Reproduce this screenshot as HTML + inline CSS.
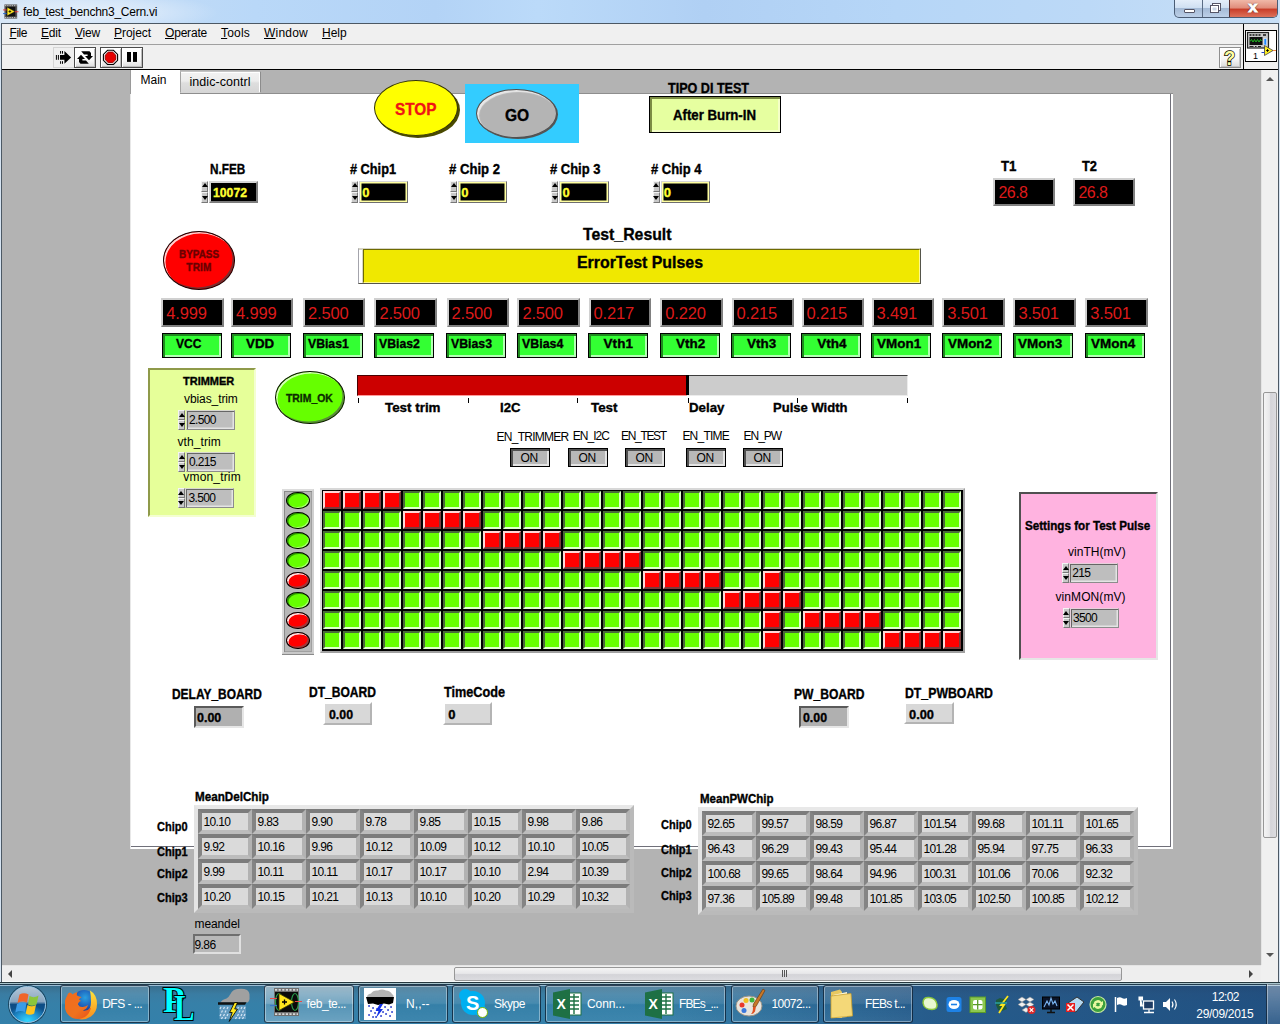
<!DOCTYPE html>
<html><head><meta charset="utf-8"><title>feb_test_benchn3_Cern.vi</title>
<style>
*{box-sizing:border-box;margin:0;padding:0}
html,body{width:1280px;height:1024px;overflow:hidden;background:#b3b3b3;font-family:"Liberation Sans",sans-serif;font-size:12px;color:#000}
.a{position:absolute}
#title{left:0;top:0;width:1280px;height:24px;background:linear-gradient(90deg,#d2e3f5 0,#c4dcf6 8%,#b9d8f8 20%,#b3d3f6 34%,#bbdaf9 42%,#b0d0f4 55%,#b6d6f7 70%,#bcd9f7 85%,#c8dff6 100%)}
#title .t{left:23px;top:4px;font-size:12.5px;color:#000;letter-spacing:-0.1px}
#menu{left:2px;top:24px;width:1276px;height:21px;background:#f0f0f0;border-bottom:1px solid #a0a0a0}
#menu span{position:absolute;top:3px;font-size:12.5px}
#menu u{text-decoration:underline}
#tool{left:2px;top:45px;width:1276px;height:24px;background:#f0f0f0}
#tline{left:2px;top:69px;width:1276px;height:1px;background:#000}
#work{left:2px;top:70px;width:1259px;height:895px;background:#b3b3b3}
.tb{background:linear-gradient(#fff 0,#fafafa 60%,#dcdcdc 100%);border:1px solid #4c4c4c;box-shadow:inset 1px 1px 0 #fff,inset -1px -1px 0 #bcbcbc}
.t{white-space:nowrap}
.sp{background:#c8c8c8}
.sp i{position:absolute;left:0;width:100%;height:50%;border:1px solid;border-color:#f4f4f4 #787878 #787878 #f4f4f4;background:#c8c8c8}
.sp i.u{top:0}.sp i.d{bottom:0}
.sp i.u:after{content:"";position:absolute;left:-.5px;top:1.5px;border:3px solid transparent;border-top:none;border-bottom:4px solid #000}
.sp i.d:after{content:"";position:absolute;left:-.5px;bottom:1.5px;border:3px solid transparent;border-bottom:none;border-top:4px solid #000}
i.g,i.r{position:absolute;width:18px;height:18px;border:2px solid}
i.g{background:#66ff00;border-color:#4a6a3a #e0ffd0 #e0ffd0 #4a6a3a}
i.r{background:#ff0000;border-color:#ffd6d6 #7a3c3c #7a3c3c #ffd6d6}

</style></head><body>
<div id="title" class="a"></div>
<div id="menu" class="a"></div>
<div id="tool" class="a"></div>
<div id="tline" class="a"></div>
<div id="work" class="a"></div>
<!-- toolbar buttons -->
<div class="a" style="left:53px;top:47px;width:21.500px;height:21px;border:1px solid #d4d4d4;background:#efefef"></div>
<div class="a tb" style="left:74px;top:47px;width:22px;height:21px"></div>
<div class="a tb" style="left:100px;top:47px;width:22px;height:21px"></div>
<div class="a tb" style="left:121px;top:47px;width:22px;height:21px"></div>
<svg class="a" style="left:53px;top:47px" width="91" height="21" viewBox="53 47 91 21">
<path d="M60 55h4.400v-4l6.700 6.400-6.700 6.400v-4h-4.400z" fill="#000"/>
<path d="M56.400 55v4.800M58.400 55v4.800" stroke="#000" stroke-width="1"/>
<path d="M60.600 51v2.700M62.500 51v2.700M60.600 61.200v2.600M62.500 61.200v2.600" stroke="#000" stroke-width="1"/>
<path d="M81.20 51.20 L89.50 51.20 L91.00 53.00 L91.00 56.00 L93.00 56.00 L89.00 60.30 L85.00 56.00 L87.60 56.00 L87.60 54.60 L84.00 54.60Z" fill="#000"/><path d="M88.80 63.80 L80.50 63.80 L79.00 62.00 L79.00 59.00 L77.00 59.00 L81.00 54.70 L85.00 59.00 L82.40 59.00 L82.40 60.40 L86.00 60.40Z" fill="#000"/>
<path d="M107.56 50.30 L113.44 50.30 L117.60 54.46 L117.60 60.34 L113.44 64.50 L107.56 64.50 L103.40 60.34 L103.40 54.46Z" fill="#fff" stroke="#000" stroke-width="1.100"/>
<path d="M108.30 52.10 L112.70 52.10 L115.80 55.20 L115.80 59.60 L112.70 62.70 L108.30 62.70 L105.20 59.60 L105.20 55.20Z" fill="#e60000" stroke="#8a0000" stroke-width=".9"/>
<rect x="127" y="52" width="4" height="9.900" fill="#000"/><rect x="133" y="52" width="4" height="9.900" fill="#000"/>
</svg>
<!-- right toolbar -->
<div class="a" style="left:1243px;top:24px;width:1px;height:46px;background:#000"></div>
<div class="a" style="left:1244px;top:24px;width:34px;height:45px;background:#f0f0f0"></div>
<div class="a" style="left:1245px;top:30px;width:32px;height:32px;background:#fff;border:1px solid #000"></div>
<svg class="a" style="left:1245px;top:30px" width="34" height="32" viewBox="0 0 34 32">
<rect x="2.500" y="2.500" width="21" height="15.500" fill="#c8c8c8" stroke="#222" stroke-width="1.200"/>
<rect x="4.500" y="7" width="13" height="8" fill="#111"/>
<path d="M5 11.500l1.500-2 1.500 2.500 1.500-2.500 1.500 2.500 1.500-2.500 1.500 2.500 1.500-2.500 1 1.500" fill="none" stroke="#2c2" stroke-width=".9"/>
<path d="M4.500 5h2M7.500 5h2M10.500 5h2M13.500 5h2M18 5h3" stroke="#111" stroke-width="1.600"/>
<rect x="19" y="8.500" width="2.600" height="6.500" fill="#28f" stroke="#fff" stroke-width=".5"/>
<path d="M4.500 16.500h4M10 16.500h1.500M13 16.500h3" stroke="#222" stroke-width="1"/>
<path d="M19.500 15.500v10l8.500-5z" fill="#ffee22" stroke="#444" stroke-width=".8"/>
<path d="M21 20.500h3M22.500 19v3" stroke="#000" stroke-width=".8"/>
<path d="M16.500 22.500h3" stroke="#24c" stroke-width="1"/><path d="M28 20.500h3" stroke="#e84" stroke-width="1"/>
<text x="8" y="29" font-family="Liberation Sans,sans-serif" font-size="9" fill="#000">1</text>
</svg>
<div class="a" style="left:1219px;top:47px;width:22px;height:21px;background:linear-gradient(#fff 0,#f8f8f8 55%,#dadada 100%);border:1px solid #8e8e8e;box-shadow:inset 1px 1px 0 #fff,inset -1px -1px 0 #c4c4c4"></div>
<span class="a" style="left:1224.200px;top:47.500px;font-size:20px;line-height:20px;font-weight:bold;color:#ffffa0;-webkit-text-stroke:1.500px #000;paint-order:stroke fill;transform:scaleX(.92);transform-origin:0 0">?</span>
<!-- window buttons -->
<div class="a" style="left:1174px;top:0;width:104px;height:18px;border:1px solid #4a5c74;border-top:none;border-radius:0 0 5px 5px;overflow:hidden;background:linear-gradient(#e4eefa 0,#d0e0f2 45%,#a4bad6 50%,#bcd0e8 100%)">
<div class="a" style="left:27px;top:0;width:1px;height:18px;background:#5a6c84"></div>
<div class="a" style="left:54px;top:0;width:49px;height:18px;border-left:1px solid #5a3030;background:linear-gradient(#f0b8a8 0,#e08c7a 45%,#c83c28 50%,#e07860 100%)"></div>
<div class="a" style="left:9px;top:9px;width:11px;height:4px;background:#fff;border:1px solid #556;border-radius:1px"></div>
<div class="a" style="left:37px;top:3px;width:9px;height:8px;border:1px solid #556;background:#e8eef8;box-shadow:inset 0 0 0 1.500px #fff"></div>
<div class="a" style="left:35px;top:5px;width:9px;height:8px;border:1px solid #556;background:#c8d4e4;box-shadow:inset 0 0 0 1.500px #fff"></div>
<span class="a" style="left:74px;top:-1.500px;font-size:14px;line-height:16px;font-weight:bold;color:#fff;-webkit-text-stroke:.800px #fff;text-shadow:0 0 1.500px #40201c,0 0 1.500px #40201c,0 0 1px #40201c;transform:scaleX(1.200)">x</span>
</div>
<!-- app icon -->
<div class="a" style="left:0;top:0;width:230px;height:23px;background:radial-gradient(ellipse 55% 90% at 40% 55%,rgba(255,255,255,.55) 0,rgba(255,255,255,.3) 55%,rgba(255,255,255,0) 100%)"></div>
<svg class="a" style="left:2.500px;top:3.500px" width="16.500" height="15.500" viewBox="0 0 18 17">
<rect x="1.500" y=".500" width="14" height="15.500" fill="#555"/><rect x="3.500" y="3" width="10" height="10.500" fill="#111"/>
<path d="M2 1.800h13M2 14.800h13" stroke="#ccc" stroke-width="1" stroke-dasharray="1.500 1"/>
<path d="M4.500 3.500v9.500l8.500-4.700z" fill="#ffe820" stroke="#222" stroke-width=".5"/>
<path d="M6 8.200h3M7.500 6.700v3" stroke="#000" stroke-width=".8"/>
<path d="M0 6.500h4M13 8.500h4" stroke="#e33" stroke-width="1"/><path d="M0 10.500h4" stroke="#26c" stroke-width="1"/>
</svg>
<!-- vertical scrollbar -->
<div class="a" style="left:1261px;top:70px;width:17px;height:895px;background:#f0f0f0;border-left:1px solid #e4e4e4"></div>
<div class="a" style="left:1263px;top:392px;width:14px;height:446px;border:1px solid #979797;border-radius:2px;background:linear-gradient(90deg,#f4f4f4 0,#e8e8ea 45%,#d4d4d8 55%,#dcdce0 100%)"></div>
<div class="a" style="left:1265.500px;top:77px;border:4px solid transparent;border-top:none;border-bottom:4.500px solid #555"></div>
<div class="a" style="left:1265.500px;top:953px;border:4px solid transparent;border-bottom:none;border-top:4.500px solid #555"></div>
<!-- horizontal scrollbar -->
<div class="a" style="left:2px;top:965px;width:1276px;height:17px;background:#eee;border-top:1px solid #e4e4e4;border-bottom:1px solid #f6fafa"></div>
<div class="a" style="left:1261px;top:965px;width:17px;height:17px;background:#f0f0f0"></div>
<div class="a" style="left:454px;top:966.500px;width:668px;height:14px;border:1px solid #979797;border-radius:2px;background:linear-gradient(#f4f4f4 0,#e8e8ea 45%,#d4d4d8 55%,#dcdce0 100%)"></div>
<div class="a" style="left:782px;top:970px;width:1px;height:7px;background:#555;box-shadow:2px 0 0 #555,4px 0 0 #555"></div>
<div class="a" style="left:8px;top:969.500px;border:4px solid transparent;border-left:none;border-right:4.500px solid #444"></div>
<div class="a" style="left:1249px;top:969.500px;border:4px solid transparent;border-right:none;border-left:4.500px solid #444"></div>
<!-- window borders -->
<div class="a" style="left:0;top:23px;width:1px;height:959px;background:#d6e4f2"></div>
<div class="a" style="left:1px;top:23px;width:1px;height:959px;background:#4c5864"></div>
<div class="a" style="left:1279px;top:18px;width:1px;height:964px;background:#d6e4f2"></div>
<div class="a" style="left:1278px;top:23px;width:1px;height:959px;background:#4c5864"></div>
<div class="a" style="left:1px;top:23px;width:1278px;height:1px;background:#4c5864"></div>
<!--TASKBAR-->

<div class="a" style="left:180.0px;top:71.0px;width:81.0px;height:22.0px;background:linear-gradient(#f2f2f2 0,#ececec 45%,#dedede 55%,#d6d6d6 100%);border:1px solid;border-color:#c4c4c4 #8c8c8c #d6d6d6 #a4a4a4;box-shadow:inset -1px 0 0 #fff,inset 0 1px 0 #fff"></div>
<div class="a" style="left:180.0px;top:93.0px;width:993.0px;height:1.0px;background:#8e8e8e"></div>
<div class="a" style="left:131.0px;top:94.0px;width:1042.0px;height:755.0px;background:#fff;box-shadow:inset -2px -2px 0 #fff, inset -3px -3px 0 #70707a"></div>
<div class="a" style="left:130.0px;top:70.0px;width:50.0px;height:24.0px;background:#fff;border-left:1px solid #9a9a9a"></div>
<div class="a" style="left:130.0px;top:94.0px;width:1.0px;height:755.0px;background:#e8e8e8"></div>
<span class="a t" style="left:140.5px;top:74.0px;font-size:12px;line-height:12px;">Main</span>
<span class="a t" style="left:189.5px;top:76.0px;font-size:12.5px;line-height:12.5px;letter-spacing:0.05px;">indic-contrl</span>
<div class="a" style="left:375.5px;top:81.5px;width:84.0px;height:56.0px;border-radius:50%;background:#4a4a00"></div>
<div class="a" style="left:374.0px;top:80.0px;width:84.0px;height:56.0px;border-radius:50%;background:#ffff00;border:1px solid #33330a"></div>
<span class="a t" style="left:394.5px;top:101.0px;font-size:16.5px;line-height:16.5px;font-weight:bold;-webkit-text-stroke:.35px;color:#f01414;transform:scaleX(0.930);transform-origin:0 0;">STOP</span>
<div class="a" style="left:465.0px;top:84.0px;width:114.0px;height:58.5px;background:#33ccff"></div>
<div class="a" style="left:477.0px;top:90.0px;width:81.0px;height:49.0px;border-radius:50%;background:#555"></div>
<div class="a" style="left:476.0px;top:89.0px;width:81.0px;height:49.0px;border-radius:50%;background:#b4b4b4;border:1px solid #505050;box-shadow:inset 2px 2px 1px #e8e8e8"></div>
<span class="a t" style="left:504.5px;top:107.0px;font-size:16.5px;line-height:16.5px;font-weight:bold;-webkit-text-stroke:.35px;transform:scaleX(0.943);transform-origin:0 0;">GO</span>
<span class="a t" style="left:667.5px;top:81.0px;font-size:14px;line-height:14px;font-weight:bold;-webkit-text-stroke:.35px;transform:scaleX(0.898);transform-origin:0 0;">TIPO DI TEST</span>
<div class="a" style="left:649.0px;top:96.0px;width:132.3px;height:37.0px;background:#e6ffa0;border:1px solid #000;box-shadow:inset 2px 2px 0 #7c8c44, inset -2px -2px 0 #f4ffc8"></div>
<span class="a t" style="left:673.0px;top:108.0px;font-size:14px;line-height:14px;font-weight:bold;-webkit-text-stroke:.35px;transform:scaleX(0.944);transform-origin:0 0;">After Burn-IN</span>
<span class="a t" style="left:209.5px;top:162.0px;font-size:14px;line-height:14px;font-weight:bold;-webkit-text-stroke:.35px;transform:scaleX(0.840);transform-origin:0 0;">N.FEB</span>
<div class="a sp" style="left:201.0px;top:180.5px;width:7px;height:22px"><i class="u"></i><i class="d"></i></div>
<div class="a" style="left:208.5px;top:180.5px;width:49.5px;height:22.5px;background:#000;border:2px solid;border-color:#d6d6d6 #7c7c7c #7c7c7c #d6d6d6"></div>
<span class="a t" style="left:212.8px;top:186.0px;font-size:13px;line-height:13px;font-weight:bold;-webkit-text-stroke:.35px;color:#ffff33;transform:scaleX(0.941);transform-origin:0 0;">10072</span>
<span class="a t" style="left:350.0px;top:162.0px;font-size:14px;line-height:14px;font-weight:bold;-webkit-text-stroke:.35px;transform:scaleX(0.910);transform-origin:0 0;"># Chip1</span>
<div class="a sp" style="left:351.0px;top:180.5px;width:7px;height:22px"><i class="u"></i><i class="d"></i></div>
<div class="a" style="left:359.0px;top:180.5px;width:49.4px;height:22.2px;background:#000;border:1px solid;border-color:#d6d6d6 #6e6e6e #6e6e6e #d6d6d6;box-shadow:inset 0 0 0 1.5px #ffffa0"></div>
<span class="a t" style="left:362.2px;top:186.0px;font-size:13px;line-height:13px;font-weight:bold;-webkit-text-stroke:.35px;color:#ffff33;">0</span>
<span class="a t" style="left:448.5px;top:162.0px;font-size:14px;line-height:14px;font-weight:bold;-webkit-text-stroke:.35px;transform:scaleX(0.937);transform-origin:0 0;"># Chip 2</span>
<div class="a sp" style="left:450.0px;top:180.5px;width:7px;height:22px"><i class="u"></i><i class="d"></i></div>
<div class="a" style="left:458.0px;top:180.5px;width:49.4px;height:22.2px;background:#000;border:1px solid;border-color:#d6d6d6 #6e6e6e #6e6e6e #d6d6d6;box-shadow:inset 0 0 0 1.5px #ffffa0"></div>
<span class="a t" style="left:461.2px;top:186.0px;font-size:13px;line-height:13px;font-weight:bold;-webkit-text-stroke:.35px;color:#ffff33;">0</span>
<span class="a t" style="left:550.0px;top:162.0px;font-size:14px;line-height:14px;font-weight:bold;-webkit-text-stroke:.35px;transform:scaleX(0.927);transform-origin:0 0;"># Chip 3</span>
<div class="a sp" style="left:551.2px;top:180.5px;width:7px;height:22px"><i class="u"></i><i class="d"></i></div>
<div class="a" style="left:559.2px;top:180.5px;width:49.4px;height:22.2px;background:#000;border:1px solid;border-color:#d6d6d6 #6e6e6e #6e6e6e #d6d6d6;box-shadow:inset 0 0 0 1.5px #ffffa0"></div>
<span class="a t" style="left:562.5px;top:186.0px;font-size:13px;line-height:13px;font-weight:bold;-webkit-text-stroke:.35px;color:#ffff33;">0</span>
<span class="a t" style="left:651.0px;top:162.0px;font-size:14px;line-height:14px;font-weight:bold;-webkit-text-stroke:.35px;transform:scaleX(0.927);transform-origin:0 0;"># Chip 4</span>
<div class="a sp" style="left:652.5px;top:180.5px;width:7px;height:22px"><i class="u"></i><i class="d"></i></div>
<div class="a" style="left:660.5px;top:180.5px;width:49.4px;height:22.2px;background:#000;border:1px solid;border-color:#d6d6d6 #6e6e6e #6e6e6e #d6d6d6;box-shadow:inset 0 0 0 1.5px #ffffa0"></div>
<span class="a t" style="left:663.7px;top:186.0px;font-size:13px;line-height:13px;font-weight:bold;-webkit-text-stroke:.35px;color:#ffff33;">0</span>
<span class="a t" style="left:1001.0px;top:159.0px;font-size:14px;line-height:14px;font-weight:bold;-webkit-text-stroke:.35px;transform:scaleX(0.949);transform-origin:0 0;">T1</span>
<span class="a t" style="left:1082.0px;top:159.0px;font-size:14px;line-height:14px;font-weight:bold;-webkit-text-stroke:.35px;transform:scaleX(0.918);transform-origin:0 0;">T2</span>
<div class="a" style="left:992.5px;top:178.0px;width:62.0px;height:27.5px;background:#000;border:2px solid;border-color:#d0d0d0 #808080 #808080 #d0d0d0"></div>
<span class="a t" style="left:998.5px;top:185.0px;font-size:16px;line-height:16px;color:#dc1a1a;letter-spacing:-0.54px;">26.8</span>
<div class="a" style="left:1072.5px;top:178.0px;width:62.0px;height:27.5px;background:#000;border:2px solid;border-color:#d0d0d0 #808080 #808080 #d0d0d0"></div>
<span class="a t" style="left:1078.5px;top:185.0px;font-size:16px;line-height:16px;color:#dc1a1a;letter-spacing:-0.54px;">26.8</span>
<div class="a" style="left:163.0px;top:231.0px;width:72.0px;height:58.7px;border-radius:50%;background:#ff0000;border:1px solid #1a0000;box-shadow:inset 1.5px 1.5px 0 #ffd0d0, inset -1.5px -1.5px 0 #7a3030"></div>
<span class="a t" style="left:178.9px;top:250.0px;font-size:10px;line-height:10px;font-weight:bold;-webkit-text-stroke:.35px;color:#6a0000;transform:scaleX(0.991);transform-origin:0 0;">BYPASS</span>
<span class="a t" style="left:186.3px;top:263.0px;font-size:10px;line-height:10px;font-weight:bold;-webkit-text-stroke:.35px;color:#6a0000;letter-spacing:0.22px;">TRIM</span>
<span class="a t" style="left:582.5px;top:226.0px;font-size:16.5px;line-height:16.5px;font-weight:bold;-webkit-text-stroke:.35px;transform:scaleX(0.959);transform-origin:0 0;">Test_Result</span>
<div class="a" style="left:357.5px;top:247.5px;width:563.5px;height:36.5px;background:#d6d4c6;border:1px solid;border-color:#d6d4c6 #55554a #55554a #a4a4ac"><div class="a" style="left:0;top:1px;width:3px;bottom:0;background:#fff"></div><div class="a" style="left:4px;top:.5px;right:0;bottom:0;background:#f0e800;border:1px solid;border-color:#6e6a00 #fffa8c #fffa8c #6e6a00"></div></div>
<span class="a t" style="left:577.0px;top:254.0px;font-size:16.5px;line-height:16.5px;font-weight:bold;-webkit-text-stroke:.35px;transform:scaleX(0.963);transform-origin:0 0;">ErrorTest Pulses</span>
<div class="a" style="left:161.2px;top:298.4px;width:62.4px;height:28.2px;background:#000;border:2px solid;border-color:#d0d0d0 #808080 #808080 #d0d0d0"></div>
<span class="a t" style="left:166.2px;top:305.0px;font-size:16.5px;line-height:16.5px;color:#dc1a1a;letter-spacing:-0.16px;">4.999</span>
<div class="a" style="left:162.0px;top:333.0px;width:60.0px;height:24.5px;background:#33ff33;border:1px solid #000;box-shadow:inset 2px 2px 0 #1e8c1e, inset -2px -2px 0 #b4ffb4"></div>
<span class="a t" style="left:176.0px;top:337.0px;font-size:13.5px;line-height:13.5px;font-weight:bold;-webkit-text-stroke:.35px;transform:scaleX(0.895);transform-origin:0 0;">VCC</span>
<div class="a" style="left:231.0px;top:298.4px;width:62.4px;height:28.2px;background:#000;border:2px solid;border-color:#d0d0d0 #808080 #808080 #d0d0d0"></div>
<span class="a t" style="left:236.0px;top:305.0px;font-size:16.5px;line-height:16.5px;color:#dc1a1a;letter-spacing:-0.16px;">4.999</span>
<div class="a" style="left:231.0px;top:333.0px;width:60.0px;height:24.5px;background:#33ff33;border:1px solid #000;box-shadow:inset 2px 2px 0 #1e8c1e, inset -2px -2px 0 #b4ffb4"></div>
<span class="a t" style="left:246.4px;top:337.0px;font-size:13.5px;line-height:13.5px;font-weight:bold;-webkit-text-stroke:.35px;transform:scaleX(0.986);transform-origin:0 0;">VDD</span>
<div class="a" style="left:303.0px;top:298.4px;width:62.4px;height:28.2px;background:#000;border:2px solid;border-color:#d0d0d0 #808080 #808080 #d0d0d0"></div>
<span class="a t" style="left:308.0px;top:305.0px;font-size:16.5px;line-height:16.5px;color:#dc1a1a;letter-spacing:-0.16px;">2.500</span>
<div class="a" style="left:303.0px;top:333.0px;width:60.0px;height:24.5px;background:#33ff33;border:1px solid #000;box-shadow:inset 2px 2px 0 #1e8c1e, inset -2px -2px 0 #b4ffb4"></div>
<span class="a t" style="left:308.2px;top:337.0px;font-size:13.5px;line-height:13.5px;font-weight:bold;-webkit-text-stroke:.35px;transform:scaleX(0.905);transform-origin:0 0;">VBias1</span>
<div class="a" style="left:374.4px;top:298.4px;width:62.4px;height:28.2px;background:#000;border:2px solid;border-color:#d0d0d0 #808080 #808080 #d0d0d0"></div>
<span class="a t" style="left:379.4px;top:305.0px;font-size:16.5px;line-height:16.5px;color:#dc1a1a;letter-spacing:-0.16px;">2.500</span>
<div class="a" style="left:374.0px;top:333.0px;width:60.0px;height:24.5px;background:#33ff33;border:1px solid #000;box-shadow:inset 2px 2px 0 #1e8c1e, inset -2px -2px 0 #b4ffb4"></div>
<span class="a t" style="left:379.1px;top:337.0px;font-size:13.5px;line-height:13.5px;font-weight:bold;-webkit-text-stroke:.35px;transform:scaleX(0.906);transform-origin:0 0;">VBias2</span>
<div class="a" style="left:446.6px;top:298.4px;width:62.4px;height:28.2px;background:#000;border:2px solid;border-color:#d0d0d0 #808080 #808080 #d0d0d0"></div>
<span class="a t" style="left:451.6px;top:305.0px;font-size:16.5px;line-height:16.5px;color:#dc1a1a;letter-spacing:-0.16px;">2.500</span>
<div class="a" style="left:446.0px;top:333.0px;width:60.0px;height:24.5px;background:#33ff33;border:1px solid #000;box-shadow:inset 2px 2px 0 #1e8c1e, inset -2px -2px 0 #b4ffb4"></div>
<span class="a t" style="left:451.1px;top:337.0px;font-size:13.5px;line-height:13.5px;font-weight:bold;-webkit-text-stroke:.35px;transform:scaleX(0.911);transform-origin:0 0;">VBias3</span>
<div class="a" style="left:517.4px;top:298.4px;width:62.4px;height:28.2px;background:#000;border:2px solid;border-color:#d0d0d0 #808080 #808080 #d0d0d0"></div>
<span class="a t" style="left:522.4px;top:305.0px;font-size:16.5px;line-height:16.5px;color:#dc1a1a;letter-spacing:-0.16px;">2.500</span>
<div class="a" style="left:516.9px;top:333.0px;width:60.0px;height:24.5px;background:#33ff33;border:1px solid #000;box-shadow:inset 2px 2px 0 #1e8c1e, inset -2px -2px 0 #b4ffb4"></div>
<span class="a t" style="left:522.0px;top:337.0px;font-size:13.5px;line-height:13.5px;font-weight:bold;-webkit-text-stroke:.35px;transform:scaleX(0.917);transform-origin:0 0;">VBias4</span>
<div class="a" style="left:588.5px;top:298.4px;width:62.4px;height:28.2px;background:#000;border:2px solid;border-color:#d0d0d0 #808080 #808080 #d0d0d0"></div>
<span class="a t" style="left:593.5px;top:305.0px;font-size:16.5px;line-height:16.5px;color:#dc1a1a;letter-spacing:-0.16px;">0.217</span>
<div class="a" style="left:588.0px;top:333.0px;width:60.0px;height:24.5px;background:#33ff33;border:1px solid #000;box-shadow:inset 2px 2px 0 #1e8c1e, inset -2px -2px 0 #b4ffb4"></div>
<span class="a t" style="left:603.5px;top:337.0px;font-size:13.5px;line-height:13.5px;font-weight:bold;-webkit-text-stroke:.35px;letter-spacing:0.12px;">Vth1</span>
<div class="a" style="left:660.3px;top:298.4px;width:62.4px;height:28.2px;background:#000;border:2px solid;border-color:#d0d0d0 #808080 #808080 #d0d0d0"></div>
<span class="a t" style="left:665.3px;top:305.0px;font-size:16.5px;line-height:16.5px;color:#dc1a1a;letter-spacing:-0.16px;">0.220</span>
<div class="a" style="left:660.0px;top:333.0px;width:60.0px;height:24.5px;background:#33ff33;border:1px solid #000;box-shadow:inset 2px 2px 0 #1e8c1e, inset -2px -2px 0 #b4ffb4"></div>
<span class="a t" style="left:675.8px;top:337.0px;font-size:13.5px;line-height:13.5px;font-weight:bold;-webkit-text-stroke:.35px;transform:scaleX(0.996);transform-origin:0 0;">Vth2</span>
<div class="a" style="left:731.6px;top:298.4px;width:62.4px;height:28.2px;background:#000;border:2px solid;border-color:#d0d0d0 #808080 #808080 #d0d0d0"></div>
<span class="a t" style="left:736.6px;top:305.0px;font-size:16.5px;line-height:16.5px;color:#dc1a1a;letter-spacing:-0.16px;">0.215</span>
<div class="a" style="left:731.0px;top:333.0px;width:60.0px;height:24.5px;background:#33ff33;border:1px solid #000;box-shadow:inset 2px 2px 0 #1e8c1e, inset -2px -2px 0 #b4ffb4"></div>
<span class="a t" style="left:747.0px;top:337.0px;font-size:13.5px;line-height:13.5px;font-weight:bold;-webkit-text-stroke:.35px;transform:scaleX(0.995);transform-origin:0 0;">Vth3</span>
<div class="a" style="left:801.6px;top:298.4px;width:62.4px;height:28.2px;background:#000;border:2px solid;border-color:#d0d0d0 #808080 #808080 #d0d0d0"></div>
<span class="a t" style="left:806.6px;top:305.0px;font-size:16.5px;line-height:16.5px;color:#dc1a1a;letter-spacing:-0.16px;">0.215</span>
<div class="a" style="left:801.2px;top:333.0px;width:60.0px;height:24.5px;background:#33ff33;border:1px solid #000;box-shadow:inset 2px 2px 0 #1e8c1e, inset -2px -2px 0 #b4ffb4"></div>
<span class="a t" style="left:817.2px;top:337.0px;font-size:13.5px;line-height:13.5px;font-weight:bold;-webkit-text-stroke:.35px;letter-spacing:0.06px;">Vth4</span>
<div class="a" style="left:871.6px;top:298.4px;width:62.4px;height:28.2px;background:#000;border:2px solid;border-color:#d0d0d0 #808080 #808080 #d0d0d0"></div>
<span class="a t" style="left:876.6px;top:305.0px;font-size:16.5px;line-height:16.5px;color:#dc1a1a;letter-spacing:-0.16px;">3.491</span>
<div class="a" style="left:871.0px;top:333.0px;width:60.0px;height:24.5px;background:#33ff33;border:1px solid #000;box-shadow:inset 2px 2px 0 #1e8c1e, inset -2px -2px 0 #b4ffb4"></div>
<span class="a t" style="left:876.7px;top:337.0px;font-size:13.5px;line-height:13.5px;font-weight:bold;-webkit-text-stroke:.35px;transform:scaleX(0.997);transform-origin:0 0;">VMon1</span>
<div class="a" style="left:942.3px;top:298.4px;width:62.4px;height:28.2px;background:#000;border:2px solid;border-color:#d0d0d0 #808080 #808080 #d0d0d0"></div>
<span class="a t" style="left:947.3px;top:305.0px;font-size:16.5px;line-height:16.5px;color:#dc1a1a;letter-spacing:-0.16px;">3.501</span>
<div class="a" style="left:942.0px;top:333.0px;width:60.0px;height:24.5px;background:#33ff33;border:1px solid #000;box-shadow:inset 2px 2px 0 #1e8c1e, inset -2px -2px 0 #b4ffb4"></div>
<span class="a t" style="left:947.5px;top:337.0px;font-size:13.5px;line-height:13.5px;font-weight:bold;-webkit-text-stroke:.35px;transform:scaleX(0.994);transform-origin:0 0;">VMon2</span>
<div class="a" style="left:1013.4px;top:298.4px;width:62.4px;height:28.2px;background:#000;border:2px solid;border-color:#d0d0d0 #808080 #808080 #d0d0d0"></div>
<span class="a t" style="left:1018.4px;top:305.0px;font-size:16.5px;line-height:16.5px;color:#dc1a1a;letter-spacing:-0.16px;">3.501</span>
<div class="a" style="left:1013.0px;top:333.0px;width:60.0px;height:24.5px;background:#33ff33;border:1px solid #000;box-shadow:inset 2px 2px 0 #1e8c1e, inset -2px -2px 0 #b4ffb4"></div>
<span class="a t" style="left:1018.2px;top:337.0px;font-size:13.5px;line-height:13.5px;font-weight:bold;-webkit-text-stroke:.35px;transform:scaleX(0.997);transform-origin:0 0;">VMon3</span>
<div class="a" style="left:1085.2px;top:298.4px;width:62.4px;height:28.2px;background:#000;border:2px solid;border-color:#d0d0d0 #808080 #808080 #d0d0d0"></div>
<span class="a t" style="left:1090.2px;top:305.0px;font-size:16.5px;line-height:16.5px;color:#dc1a1a;letter-spacing:-0.16px;">3.501</span>
<div class="a" style="left:1085.0px;top:333.0px;width:60.0px;height:24.5px;background:#33ff33;border:1px solid #000;box-shadow:inset 2px 2px 0 #1e8c1e, inset -2px -2px 0 #b4ffb4"></div>
<span class="a t" style="left:1091.1px;top:337.0px;font-size:13.5px;line-height:13.5px;font-weight:bold;-webkit-text-stroke:.35px;transform:scaleX(0.998);transform-origin:0 0;">VMon4</span>
<div class="a" style="left:148.2px;top:368.2px;width:108.0px;height:149.0px;background:#e6ff99;border:2px solid;border-color:#8f9a4a #f4ffd0 #f4ffd0 #8f9a4a"></div>
<span class="a t" style="left:183.3px;top:376.0px;font-size:11px;line-height:11px;font-weight:bold;-webkit-text-stroke:.35px;transform:scaleX(0.999);transform-origin:0 0;">TRIMMER</span>
<span class="a t" style="left:184.0px;top:393.0px;font-size:12px;line-height:12px;letter-spacing:-0.09px;">vbias_trim</span>
<span class="a t" style="left:177.5px;top:436.0px;font-size:12px;line-height:12px;letter-spacing:0.08px;">vth_trim</span>
<span class="a t" style="left:183.3px;top:471.0px;font-size:12px;line-height:12px;letter-spacing:0.17px;">vmon_trim</span>
<div class="a sp" style="left:178.0px;top:410.0px;width:7px;height:19.5px"><i class="u"></i><i class="d"></i></div>
<div class="a" style="left:185.5px;top:410.0px;width:49.0px;height:19.5px;background:#bebebe;border:1px solid;border-color:#d8d8d0 #8c8c8c #8c8c8c #d8d8d0;box-shadow:inset 1px 1px 0 #666, inset -1.5px -1.5px 0 #e4e4e4"></div>
<span class="a t" style="left:189.0px;top:414.0px;font-size:12px;line-height:12px;letter-spacing:-0.65px;">2.500</span>
<div class="a sp" style="left:178.0px;top:452.0px;width:7px;height:19.5px"><i class="u"></i><i class="d"></i></div>
<div class="a" style="left:185.5px;top:452.0px;width:49.0px;height:19.5px;background:#bebebe;border:1px solid;border-color:#d8d8d0 #8c8c8c #8c8c8c #d8d8d0;box-shadow:inset 1px 1px 0 #666, inset -1.5px -1.5px 0 #e4e4e4"></div>
<span class="a t" style="left:189.0px;top:456.0px;font-size:12px;line-height:12px;letter-spacing:-0.65px;">0.215</span>
<div class="a sp" style="left:177.5px;top:488.0px;width:7px;height:19.5px"><i class="u"></i><i class="d"></i></div>
<div class="a" style="left:185.0px;top:488.0px;width:49.0px;height:19.5px;background:#bebebe;border:1px solid;border-color:#d8d8d0 #8c8c8c #8c8c8c #d8d8d0;box-shadow:inset 1px 1px 0 #666, inset -1.5px -1.5px 0 #e4e4e4"></div>
<span class="a t" style="left:188.5px;top:492.0px;font-size:12px;line-height:12px;letter-spacing:-0.65px;">3.500</span>
<div class="a" style="left:275.0px;top:371.0px;width:69.8px;height:52.8px;border-radius:50%;background:#66ff00;border:1px solid #0a1400;box-shadow:inset 1.5px 1.5px 0 #d4ffb4, inset -1.5px -1.5px 0 #5a8a3a"></div>
<span class="a t" style="left:286.4px;top:393.0px;font-size:11px;line-height:11px;font-weight:bold;-webkit-text-stroke:.35px;color:#0c2c00;transform:scaleX(0.945);transform-origin:0 0;">TRIM_OK</span>
<div class="a" style="left:357.0px;top:375.0px;width:551.0px;height:20.6px;background:#cccccc;border-top:1px solid #3c3c3c;border-left:1px solid #3c3c3c;border-bottom:1px solid #ececec;border-right:1px solid #ececec"></div>
<div class="a" style="left:357.0px;top:375.0px;width:330.0px;height:20.6px;background:#cc0000;border-top:1px solid #4a0000;border-left:1px solid #4a0000;border-bottom:1px solid #ff9a9a"></div>
<div class="a" style="left:686.0px;top:375.0px;width:3.0px;height:20.3px;background:#000"></div>
<div class="a" style="left:357.5px;top:398.0px;width:1.0px;height:5.0px;background:#000"></div>
<div class="a" style="left:467.5px;top:398.0px;width:1.0px;height:5.0px;background:#000"></div>
<div class="a" style="left:577.0px;top:398.0px;width:1.0px;height:5.0px;background:#000"></div>
<div class="a" style="left:687.5px;top:398.0px;width:1.0px;height:5.0px;background:#000"></div>
<div class="a" style="left:797.0px;top:398.0px;width:1.0px;height:5.0px;background:#000"></div>
<div class="a" style="left:906.5px;top:398.0px;width:1.0px;height:5.0px;background:#000"></div>
<span class="a t" style="left:384.5px;top:401.0px;font-size:13.5px;line-height:13.5px;font-weight:bold;-webkit-text-stroke:.35px;transform:scaleX(0.991);transform-origin:0 0;">Test trim</span>
<span class="a t" style="left:499.5px;top:401.0px;font-size:13.5px;line-height:13.5px;font-weight:bold;-webkit-text-stroke:.35px;transform:scaleX(0.976);transform-origin:0 0;">I2C</span>
<span class="a t" style="left:591.0px;top:401.0px;font-size:13.5px;line-height:13.5px;font-weight:bold;-webkit-text-stroke:.35px;transform:scaleX(0.990);transform-origin:0 0;">Test</span>
<span class="a t" style="left:689.0px;top:401.0px;font-size:13.5px;line-height:13.5px;font-weight:bold;-webkit-text-stroke:.35px;transform:scaleX(0.985);transform-origin:0 0;">Delay</span>
<span class="a t" style="left:772.5px;top:401.0px;font-size:13.5px;line-height:13.5px;font-weight:bold;-webkit-text-stroke:.35px;transform:scaleX(0.966);transform-origin:0 0;">Pulse Width</span>
<span class="a t" style="left:496.6px;top:431.0px;font-size:12px;line-height:12px;letter-spacing:-0.75px;">EN_TRIMMER</span>
<div class="a" style="left:510.0px;top:447.5px;width:40.0px;height:19.5px;background:#b8b8b8;border:1px solid #000;box-shadow:inset 2px 2px 0 #505050, inset -2px -2px 0 #e4e4e4"></div>
<span class="a t" style="left:520.5px;top:452.0px;font-size:12px;line-height:12px;letter-spacing:-0.25px;">ON</span>
<span class="a t" style="left:572.8px;top:430.0px;font-size:12px;line-height:12px;letter-spacing:-1.00px;">EN_I2C</span>
<div class="a" style="left:568.0px;top:447.5px;width:40.0px;height:19.5px;background:#b8b8b8;border:1px solid #000;box-shadow:inset 2px 2px 0 #505050, inset -2px -2px 0 #e4e4e4"></div>
<span class="a t" style="left:578.5px;top:452.0px;font-size:12px;line-height:12px;letter-spacing:-0.25px;">ON</span>
<span class="a t" style="left:621.0px;top:430.0px;font-size:12px;line-height:12px;letter-spacing:-1.32px;">EN_TEST</span>
<div class="a" style="left:625.0px;top:447.5px;width:40.0px;height:19.5px;background:#b8b8b8;border:1px solid #000;box-shadow:inset 2px 2px 0 #505050, inset -2px -2px 0 #e4e4e4"></div>
<span class="a t" style="left:635.5px;top:452.0px;font-size:12px;line-height:12px;letter-spacing:-0.25px;">ON</span>
<span class="a t" style="left:682.4px;top:430.0px;font-size:12px;line-height:12px;letter-spacing:-0.77px;">EN_TIME</span>
<div class="a" style="left:686.0px;top:447.5px;width:40.0px;height:19.5px;background:#b8b8b8;border:1px solid #000;box-shadow:inset 2px 2px 0 #505050, inset -2px -2px 0 #e4e4e4"></div>
<span class="a t" style="left:696.5px;top:452.0px;font-size:12px;line-height:12px;letter-spacing:-0.25px;">ON</span>
<span class="a t" style="left:743.6px;top:430.0px;font-size:12px;line-height:12px;letter-spacing:-1.05px;">EN_PW</span>
<div class="a" style="left:743.0px;top:447.5px;width:40.0px;height:19.5px;background:#b8b8b8;border:1px solid #000;box-shadow:inset 2px 2px 0 #505050, inset -2px -2px 0 #e4e4e4"></div>
<span class="a t" style="left:753.5px;top:452.0px;font-size:12px;line-height:12px;letter-spacing:-0.25px;">ON</span>
<div class="a" style="left:282.4px;top:488.5px;width:31.2px;height:165.0px;background:#b8b8b8;border:2px solid;border-color:#dcdcdc #d0d0d0 #c8c8c8 #dcdcdc;box-shadow:inset 1px 1px 0 #8a8a8a, inset -1px -1px 0 #a0a0a0, 0 1px 0 #8a8a8a"></div>
<div class="a" style="left:286.3px;top:492.2px;width:23.5px;height:17.3px;border-radius:50%;background:#66ff00;border:1px solid #000;box-shadow:inset 1.5px 1px 0 #2c9a00, inset -1px -1px 0 #a8ff70"></div>
<div class="a" style="left:286.3px;top:512.2px;width:23.5px;height:17.3px;border-radius:50%;background:#66ff00;border:1px solid #000;box-shadow:inset 1.5px 1px 0 #2c9a00, inset -1px -1px 0 #a8ff70"></div>
<div class="a" style="left:286.3px;top:532.2px;width:23.5px;height:17.3px;border-radius:50%;background:#66ff00;border:1px solid #000;box-shadow:inset 1.5px 1px 0 #2c9a00, inset -1px -1px 0 #a8ff70"></div>
<div class="a" style="left:286.3px;top:552.2px;width:23.5px;height:17.3px;border-radius:50%;background:#66ff00;border:1px solid #000;box-shadow:inset 1.5px 1px 0 #2c9a00, inset -1px -1px 0 #a8ff70"></div>
<div class="a" style="left:286.3px;top:572.2px;width:23.5px;height:17.3px;border-radius:50%;background:#ff0000;border:1px solid #000;box-shadow:inset 1.5px 1.5px 0 #ffe4e4, inset -1.5px -1.5px 0 #9a3c3c"></div>
<div class="a" style="left:286.3px;top:592.2px;width:23.5px;height:17.3px;border-radius:50%;background:#66ff00;border:1px solid #000;box-shadow:inset 1.5px 1px 0 #2c9a00, inset -1px -1px 0 #a8ff70"></div>
<div class="a" style="left:286.3px;top:612.2px;width:23.5px;height:17.3px;border-radius:50%;background:#ff0000;border:1px solid #000;box-shadow:inset 1.5px 1.5px 0 #ffe4e4, inset -1.5px -1.5px 0 #9a3c3c"></div>
<div class="a" style="left:286.3px;top:632.2px;width:23.5px;height:17.3px;border-radius:50%;background:#ff0000;border:1px solid #000;box-shadow:inset 1.5px 1.5px 0 #ffe4e4, inset -1.5px -1.5px 0 #9a3c3c"></div>
<div class="a" style="left:319.5px;top:487.7px;width:645.5px;height:165.3px;background:#000;border:2px solid;border-color:#d8d8d8 #a0a0a0 #a0a0a0 #d8d8d8"></div>
<div class="a" style="left:323px;top:491px;width:640px;height:160px"><i class="r" style="left:0px;top:0px"></i><i class="r" style="left:20px;top:0px"></i><i class="r" style="left:40px;top:0px"></i><i class="r" style="left:60px;top:0px"></i><i class="g" style="left:80px;top:0px"></i><i class="g" style="left:100px;top:0px"></i><i class="g" style="left:120px;top:0px"></i><i class="g" style="left:140px;top:0px"></i><i class="g" style="left:160px;top:0px"></i><i class="g" style="left:180px;top:0px"></i><i class="g" style="left:200px;top:0px"></i><i class="g" style="left:220px;top:0px"></i><i class="g" style="left:240px;top:0px"></i><i class="g" style="left:260px;top:0px"></i><i class="g" style="left:280px;top:0px"></i><i class="g" style="left:300px;top:0px"></i><i class="g" style="left:320px;top:0px"></i><i class="g" style="left:340px;top:0px"></i><i class="g" style="left:360px;top:0px"></i><i class="g" style="left:380px;top:0px"></i><i class="g" style="left:400px;top:0px"></i><i class="g" style="left:420px;top:0px"></i><i class="g" style="left:440px;top:0px"></i><i class="g" style="left:460px;top:0px"></i><i class="g" style="left:480px;top:0px"></i><i class="g" style="left:500px;top:0px"></i><i class="g" style="left:520px;top:0px"></i><i class="g" style="left:540px;top:0px"></i><i class="g" style="left:560px;top:0px"></i><i class="g" style="left:580px;top:0px"></i><i class="g" style="left:600px;top:0px"></i><i class="g" style="left:620px;top:0px"></i><i class="g" style="left:0px;top:20px"></i><i class="g" style="left:20px;top:20px"></i><i class="g" style="left:40px;top:20px"></i><i class="g" style="left:60px;top:20px"></i><i class="r" style="left:80px;top:20px"></i><i class="r" style="left:100px;top:20px"></i><i class="r" style="left:120px;top:20px"></i><i class="r" style="left:140px;top:20px"></i><i class="g" style="left:160px;top:20px"></i><i class="g" style="left:180px;top:20px"></i><i class="g" style="left:200px;top:20px"></i><i class="g" style="left:220px;top:20px"></i><i class="g" style="left:240px;top:20px"></i><i class="g" style="left:260px;top:20px"></i><i class="g" style="left:280px;top:20px"></i><i class="g" style="left:300px;top:20px"></i><i class="g" style="left:320px;top:20px"></i><i class="g" style="left:340px;top:20px"></i><i class="g" style="left:360px;top:20px"></i><i class="g" style="left:380px;top:20px"></i><i class="g" style="left:400px;top:20px"></i><i class="g" style="left:420px;top:20px"></i><i class="g" style="left:440px;top:20px"></i><i class="g" style="left:460px;top:20px"></i><i class="g" style="left:480px;top:20px"></i><i class="g" style="left:500px;top:20px"></i><i class="g" style="left:520px;top:20px"></i><i class="g" style="left:540px;top:20px"></i><i class="g" style="left:560px;top:20px"></i><i class="g" style="left:580px;top:20px"></i><i class="g" style="left:600px;top:20px"></i><i class="g" style="left:620px;top:20px"></i><i class="g" style="left:0px;top:40px"></i><i class="g" style="left:20px;top:40px"></i><i class="g" style="left:40px;top:40px"></i><i class="g" style="left:60px;top:40px"></i><i class="g" style="left:80px;top:40px"></i><i class="g" style="left:100px;top:40px"></i><i class="g" style="left:120px;top:40px"></i><i class="g" style="left:140px;top:40px"></i><i class="r" style="left:160px;top:40px"></i><i class="r" style="left:180px;top:40px"></i><i class="r" style="left:200px;top:40px"></i><i class="r" style="left:220px;top:40px"></i><i class="g" style="left:240px;top:40px"></i><i class="g" style="left:260px;top:40px"></i><i class="g" style="left:280px;top:40px"></i><i class="g" style="left:300px;top:40px"></i><i class="g" style="left:320px;top:40px"></i><i class="g" style="left:340px;top:40px"></i><i class="g" style="left:360px;top:40px"></i><i class="g" style="left:380px;top:40px"></i><i class="g" style="left:400px;top:40px"></i><i class="g" style="left:420px;top:40px"></i><i class="g" style="left:440px;top:40px"></i><i class="g" style="left:460px;top:40px"></i><i class="g" style="left:480px;top:40px"></i><i class="g" style="left:500px;top:40px"></i><i class="g" style="left:520px;top:40px"></i><i class="g" style="left:540px;top:40px"></i><i class="g" style="left:560px;top:40px"></i><i class="g" style="left:580px;top:40px"></i><i class="g" style="left:600px;top:40px"></i><i class="g" style="left:620px;top:40px"></i><i class="g" style="left:0px;top:60px"></i><i class="g" style="left:20px;top:60px"></i><i class="g" style="left:40px;top:60px"></i><i class="g" style="left:60px;top:60px"></i><i class="g" style="left:80px;top:60px"></i><i class="g" style="left:100px;top:60px"></i><i class="g" style="left:120px;top:60px"></i><i class="g" style="left:140px;top:60px"></i><i class="g" style="left:160px;top:60px"></i><i class="g" style="left:180px;top:60px"></i><i class="g" style="left:200px;top:60px"></i><i class="g" style="left:220px;top:60px"></i><i class="r" style="left:240px;top:60px"></i><i class="r" style="left:260px;top:60px"></i><i class="r" style="left:280px;top:60px"></i><i class="r" style="left:300px;top:60px"></i><i class="g" style="left:320px;top:60px"></i><i class="g" style="left:340px;top:60px"></i><i class="g" style="left:360px;top:60px"></i><i class="g" style="left:380px;top:60px"></i><i class="g" style="left:400px;top:60px"></i><i class="g" style="left:420px;top:60px"></i><i class="g" style="left:440px;top:60px"></i><i class="g" style="left:460px;top:60px"></i><i class="g" style="left:480px;top:60px"></i><i class="g" style="left:500px;top:60px"></i><i class="g" style="left:520px;top:60px"></i><i class="g" style="left:540px;top:60px"></i><i class="g" style="left:560px;top:60px"></i><i class="g" style="left:580px;top:60px"></i><i class="g" style="left:600px;top:60px"></i><i class="g" style="left:620px;top:60px"></i><i class="g" style="left:0px;top:80px"></i><i class="g" style="left:20px;top:80px"></i><i class="g" style="left:40px;top:80px"></i><i class="g" style="left:60px;top:80px"></i><i class="g" style="left:80px;top:80px"></i><i class="g" style="left:100px;top:80px"></i><i class="g" style="left:120px;top:80px"></i><i class="g" style="left:140px;top:80px"></i><i class="g" style="left:160px;top:80px"></i><i class="g" style="left:180px;top:80px"></i><i class="g" style="left:200px;top:80px"></i><i class="g" style="left:220px;top:80px"></i><i class="g" style="left:240px;top:80px"></i><i class="g" style="left:260px;top:80px"></i><i class="g" style="left:280px;top:80px"></i><i class="g" style="left:300px;top:80px"></i><i class="r" style="left:320px;top:80px"></i><i class="r" style="left:340px;top:80px"></i><i class="r" style="left:360px;top:80px"></i><i class="r" style="left:380px;top:80px"></i><i class="g" style="left:400px;top:80px"></i><i class="g" style="left:420px;top:80px"></i><i class="r" style="left:440px;top:80px"></i><i class="g" style="left:460px;top:80px"></i><i class="g" style="left:480px;top:80px"></i><i class="g" style="left:500px;top:80px"></i><i class="g" style="left:520px;top:80px"></i><i class="g" style="left:540px;top:80px"></i><i class="g" style="left:560px;top:80px"></i><i class="g" style="left:580px;top:80px"></i><i class="g" style="left:600px;top:80px"></i><i class="g" style="left:620px;top:80px"></i><i class="g" style="left:0px;top:100px"></i><i class="g" style="left:20px;top:100px"></i><i class="g" style="left:40px;top:100px"></i><i class="g" style="left:60px;top:100px"></i><i class="g" style="left:80px;top:100px"></i><i class="g" style="left:100px;top:100px"></i><i class="g" style="left:120px;top:100px"></i><i class="g" style="left:140px;top:100px"></i><i class="g" style="left:160px;top:100px"></i><i class="g" style="left:180px;top:100px"></i><i class="g" style="left:200px;top:100px"></i><i class="g" style="left:220px;top:100px"></i><i class="g" style="left:240px;top:100px"></i><i class="g" style="left:260px;top:100px"></i><i class="g" style="left:280px;top:100px"></i><i class="g" style="left:300px;top:100px"></i><i class="g" style="left:320px;top:100px"></i><i class="g" style="left:340px;top:100px"></i><i class="g" style="left:360px;top:100px"></i><i class="g" style="left:380px;top:100px"></i><i class="r" style="left:400px;top:100px"></i><i class="r" style="left:420px;top:100px"></i><i class="r" style="left:440px;top:100px"></i><i class="r" style="left:460px;top:100px"></i><i class="g" style="left:480px;top:100px"></i><i class="g" style="left:500px;top:100px"></i><i class="g" style="left:520px;top:100px"></i><i class="g" style="left:540px;top:100px"></i><i class="g" style="left:560px;top:100px"></i><i class="g" style="left:580px;top:100px"></i><i class="g" style="left:600px;top:100px"></i><i class="g" style="left:620px;top:100px"></i><i class="g" style="left:0px;top:120px"></i><i class="g" style="left:20px;top:120px"></i><i class="g" style="left:40px;top:120px"></i><i class="g" style="left:60px;top:120px"></i><i class="g" style="left:80px;top:120px"></i><i class="g" style="left:100px;top:120px"></i><i class="g" style="left:120px;top:120px"></i><i class="g" style="left:140px;top:120px"></i><i class="g" style="left:160px;top:120px"></i><i class="g" style="left:180px;top:120px"></i><i class="g" style="left:200px;top:120px"></i><i class="g" style="left:220px;top:120px"></i><i class="g" style="left:240px;top:120px"></i><i class="g" style="left:260px;top:120px"></i><i class="g" style="left:280px;top:120px"></i><i class="g" style="left:300px;top:120px"></i><i class="g" style="left:320px;top:120px"></i><i class="g" style="left:340px;top:120px"></i><i class="g" style="left:360px;top:120px"></i><i class="g" style="left:380px;top:120px"></i><i class="g" style="left:400px;top:120px"></i><i class="g" style="left:420px;top:120px"></i><i class="r" style="left:440px;top:120px"></i><i class="g" style="left:460px;top:120px"></i><i class="r" style="left:480px;top:120px"></i><i class="r" style="left:500px;top:120px"></i><i class="r" style="left:520px;top:120px"></i><i class="r" style="left:540px;top:120px"></i><i class="g" style="left:560px;top:120px"></i><i class="g" style="left:580px;top:120px"></i><i class="g" style="left:600px;top:120px"></i><i class="g" style="left:620px;top:120px"></i><i class="g" style="left:0px;top:140px"></i><i class="g" style="left:20px;top:140px"></i><i class="g" style="left:40px;top:140px"></i><i class="g" style="left:60px;top:140px"></i><i class="g" style="left:80px;top:140px"></i><i class="g" style="left:100px;top:140px"></i><i class="g" style="left:120px;top:140px"></i><i class="g" style="left:140px;top:140px"></i><i class="g" style="left:160px;top:140px"></i><i class="g" style="left:180px;top:140px"></i><i class="g" style="left:200px;top:140px"></i><i class="g" style="left:220px;top:140px"></i><i class="g" style="left:240px;top:140px"></i><i class="g" style="left:260px;top:140px"></i><i class="g" style="left:280px;top:140px"></i><i class="g" style="left:300px;top:140px"></i><i class="g" style="left:320px;top:140px"></i><i class="g" style="left:340px;top:140px"></i><i class="g" style="left:360px;top:140px"></i><i class="g" style="left:380px;top:140px"></i><i class="g" style="left:400px;top:140px"></i><i class="g" style="left:420px;top:140px"></i><i class="r" style="left:440px;top:140px"></i><i class="g" style="left:460px;top:140px"></i><i class="g" style="left:480px;top:140px"></i><i class="g" style="left:500px;top:140px"></i><i class="g" style="left:520px;top:140px"></i><i class="g" style="left:540px;top:140px"></i><i class="r" style="left:560px;top:140px"></i><i class="r" style="left:580px;top:140px"></i><i class="r" style="left:600px;top:140px"></i><i class="r" style="left:620px;top:140px"></i></div>
<div class="a" style="left:1019.0px;top:492.0px;width:139.0px;height:167.5px;background:#ffb3e0;border:2px solid;border-color:#505050 #e6e6e6 #e6e6e6 #505050"></div>
<span class="a t" style="left:1025.0px;top:520.0px;font-size:12px;line-height:12px;font-weight:bold;-webkit-text-stroke:.35px;transform:scaleX(0.970);transform-origin:0 0;">Settings for Test Pulse</span>
<span class="a t" style="left:1068.0px;top:546.0px;font-size:12px;line-height:12px;letter-spacing:0.04px;">vinTH(mV)</span>
<span class="a t" style="left:1055.4px;top:591.0px;font-size:12px;line-height:12px;letter-spacing:0.10px;">vinMON(mV)</span>
<div class="a sp" style="left:1062.0px;top:563.0px;width:7px;height:19.5px"><i class="u"></i><i class="d"></i></div>
<div class="a" style="left:1069.0px;top:563.0px;width:48.8px;height:19.5px;background:#bebebe;border:1px solid;border-color:#e8d0dc #8c8c8c #8c8c8c #e8d0dc;box-shadow:inset 1px 1px 0 #666, inset -1.5px -1.5px 0 #e4e4e4"></div>
<span class="a t" style="left:1072.2px;top:567.0px;font-size:12px;line-height:12px;letter-spacing:-0.67px;">215</span>
<div class="a sp" style="left:1062.8px;top:608.0px;width:7px;height:19.5px"><i class="u"></i><i class="d"></i></div>
<div class="a" style="left:1069.8px;top:608.0px;width:48.8px;height:19.5px;background:#bebebe;border:1px solid;border-color:#e8d0dc #8c8c8c #8c8c8c #e8d0dc;box-shadow:inset 1px 1px 0 #666, inset -1.5px -1.5px 0 #e4e4e4"></div>
<span class="a t" style="left:1073.0px;top:612.0px;font-size:12px;line-height:12px;letter-spacing:-0.67px;">3500</span>
<span class="a t" style="left:171.8px;top:687.0px;font-size:14px;line-height:14px;font-weight:bold;-webkit-text-stroke:.35px;transform:scaleX(0.853);transform-origin:0 0;">DELAY_BOARD</span>
<div class="a" style="left:194.3px;top:706.0px;width:49.5px;height:21.6px;background:#b0b0b0;border:2px solid;border-color:#5a5a5a #e6e6e6 #e6e6e6 #5a5a5a"></div>
<span class="a t" style="left:197.0px;top:711.0px;font-size:13px;line-height:13px;font-weight:bold;-webkit-text-stroke:.35px;transform:scaleX(0.960);transform-origin:0 0;">0.00</span>
<span class="a t" style="left:308.5px;top:685.0px;font-size:14px;line-height:14px;font-weight:bold;-webkit-text-stroke:.35px;transform:scaleX(0.861);transform-origin:0 0;">DT_BOARD</span>
<div class="a" style="left:322.5px;top:701.7px;width:49.8px;height:23.3px;background:#d8d8d8;border:2px solid;border-color:#fff #b4b4b4 #b4b4b4 #fff"></div>
<span class="a t" style="left:328.7px;top:708.0px;font-size:13px;line-height:13px;font-weight:bold;-webkit-text-stroke:.35px;transform:scaleX(0.949);transform-origin:0 0;">0.00</span>
<span class="a t" style="left:444.0px;top:685.0px;font-size:14px;line-height:14px;font-weight:bold;-webkit-text-stroke:.35px;transform:scaleX(0.905);transform-origin:0 0;">TimeCode</span>
<div class="a" style="left:442.6px;top:701.7px;width:49.2px;height:23.3px;background:#d8d8d8;border:2px solid;border-color:#fff #b4b4b4 #b4b4b4 #fff"></div>
<span class="a t" style="left:448.2px;top:708.0px;font-size:13px;line-height:13px;font-weight:bold;-webkit-text-stroke:.35px;">0</span>
<span class="a t" style="left:793.5px;top:687.0px;font-size:14px;line-height:14px;font-weight:bold;-webkit-text-stroke:.35px;transform:scaleX(0.863);transform-origin:0 0;">PW_BOARD</span>
<div class="a" style="left:799.0px;top:706.0px;width:50.0px;height:22.0px;background:#b0b0b0;border:2px solid;border-color:#5a5a5a #e6e6e6 #e6e6e6 #5a5a5a"></div>
<span class="a t" style="left:802.5px;top:711.0px;font-size:13px;line-height:13px;font-weight:bold;-webkit-text-stroke:.35px;transform:scaleX(0.949);transform-origin:0 0;">0.00</span>
<span class="a t" style="left:905.0px;top:686.0px;font-size:14px;line-height:14px;font-weight:bold;-webkit-text-stroke:.35px;transform:scaleX(0.877);transform-origin:0 0;">DT_PWBOARD</span>
<div class="a" style="left:903.5px;top:702.0px;width:50.5px;height:22.0px;background:#d8d8d8;border:2px solid;border-color:#fff #b4b4b4 #b4b4b4 #fff"></div>
<span class="a t" style="left:909.0px;top:708.0px;font-size:13px;line-height:13px;font-weight:bold;-webkit-text-stroke:.35px;transform:scaleX(0.988);transform-origin:0 0;">0.00</span>
<span class="a t" style="left:195.3px;top:791.0px;font-size:12px;line-height:12px;font-weight:bold;-webkit-text-stroke:.35px;transform:scaleX(0.971);transform-origin:0 0;">MeanDelChip</span>
<div class="a" style="left:194.2px;top:805.1px;width:439.6px;height:107.6px;background:#9a9a9a;border:4px solid;border-color:#e8e8e8 #bababa #bababa #e4e4e4;box-shadow:inset 1px 1px 0 #cfcfcf"></div>
<span class="a t" style="left:157.4px;top:820.0px;font-size:13px;line-height:13px;font-weight:bold;-webkit-text-stroke:.35px;transform:scaleX(0.847);transform-origin:0 0;">Chip0</span>
<div class="a" style="left:198.2px;top:809.1px;width:54.0px;height:25.0px;border:4px solid;border-color:#7c7c7c #b2b2b2 #bcbcbc #848484;background:#dadada"></div>
<span class="a t" style="left:203.6px;top:816.0px;font-size:12px;line-height:12px;letter-spacing:-0.69px;">10.10</span>
<div class="a" style="left:252.2px;top:809.1px;width:54.0px;height:25.0px;border:4px solid;border-color:#7c7c7c #b2b2b2 #bcbcbc #848484;background:#dadada"></div>
<span class="a t" style="left:257.6px;top:816.0px;font-size:12px;line-height:12px;letter-spacing:-0.67px;">9.83</span>
<div class="a" style="left:306.2px;top:809.1px;width:54.0px;height:25.0px;border:4px solid;border-color:#7c7c7c #b2b2b2 #bcbcbc #848484;background:#dadada"></div>
<span class="a t" style="left:311.6px;top:816.0px;font-size:12px;line-height:12px;letter-spacing:-0.67px;">9.90</span>
<div class="a" style="left:360.2px;top:809.1px;width:54.0px;height:25.0px;border:4px solid;border-color:#7c7c7c #b2b2b2 #bcbcbc #848484;background:#dadada"></div>
<span class="a t" style="left:365.6px;top:816.0px;font-size:12px;line-height:12px;letter-spacing:-0.67px;">9.78</span>
<div class="a" style="left:414.2px;top:809.1px;width:54.0px;height:25.0px;border:4px solid;border-color:#7c7c7c #b2b2b2 #bcbcbc #848484;background:#dadada"></div>
<span class="a t" style="left:419.6px;top:816.0px;font-size:12px;line-height:12px;letter-spacing:-0.67px;">9.85</span>
<div class="a" style="left:468.2px;top:809.1px;width:54.0px;height:25.0px;border:4px solid;border-color:#7c7c7c #b2b2b2 #bcbcbc #848484;background:#dadada"></div>
<span class="a t" style="left:473.6px;top:816.0px;font-size:12px;line-height:12px;letter-spacing:-0.69px;">10.15</span>
<div class="a" style="left:522.2px;top:809.1px;width:54.0px;height:25.0px;border:4px solid;border-color:#7c7c7c #b2b2b2 #bcbcbc #848484;background:#dadada"></div>
<span class="a t" style="left:527.6px;top:816.0px;font-size:12px;line-height:12px;letter-spacing:-0.67px;">9.98</span>
<div class="a" style="left:576.2px;top:809.1px;width:54.0px;height:25.0px;border:4px solid;border-color:#7c7c7c #b2b2b2 #bcbcbc #848484;background:#dadada"></div>
<span class="a t" style="left:581.6px;top:816.0px;font-size:12px;line-height:12px;letter-spacing:-0.67px;">9.86</span>
<span class="a t" style="left:157.4px;top:845.0px;font-size:13px;line-height:13px;font-weight:bold;-webkit-text-stroke:.35px;transform:scaleX(0.847);transform-origin:0 0;">Chip1</span>
<div class="a" style="left:198.2px;top:834.1px;width:54.0px;height:25.0px;border:4px solid;border-color:#7c7c7c #b2b2b2 #bcbcbc #848484;background:#dadada"></div>
<span class="a t" style="left:203.6px;top:841.0px;font-size:12px;line-height:12px;letter-spacing:-0.67px;">9.92</span>
<div class="a" style="left:252.2px;top:834.1px;width:54.0px;height:25.0px;border:4px solid;border-color:#7c7c7c #b2b2b2 #bcbcbc #848484;background:#dadada"></div>
<span class="a t" style="left:257.6px;top:841.0px;font-size:12px;line-height:12px;letter-spacing:-0.69px;">10.16</span>
<div class="a" style="left:306.2px;top:834.1px;width:54.0px;height:25.0px;border:4px solid;border-color:#7c7c7c #b2b2b2 #bcbcbc #848484;background:#dadada"></div>
<span class="a t" style="left:311.6px;top:841.0px;font-size:12px;line-height:12px;letter-spacing:-0.67px;">9.96</span>
<div class="a" style="left:360.2px;top:834.1px;width:54.0px;height:25.0px;border:4px solid;border-color:#7c7c7c #b2b2b2 #bcbcbc #848484;background:#dadada"></div>
<span class="a t" style="left:365.6px;top:841.0px;font-size:12px;line-height:12px;letter-spacing:-0.69px;">10.12</span>
<div class="a" style="left:414.2px;top:834.1px;width:54.0px;height:25.0px;border:4px solid;border-color:#7c7c7c #b2b2b2 #bcbcbc #848484;background:#dadada"></div>
<span class="a t" style="left:419.6px;top:841.0px;font-size:12px;line-height:12px;letter-spacing:-0.69px;">10.09</span>
<div class="a" style="left:468.2px;top:834.1px;width:54.0px;height:25.0px;border:4px solid;border-color:#7c7c7c #b2b2b2 #bcbcbc #848484;background:#dadada"></div>
<span class="a t" style="left:473.6px;top:841.0px;font-size:12px;line-height:12px;letter-spacing:-0.69px;">10.12</span>
<div class="a" style="left:522.2px;top:834.1px;width:54.0px;height:25.0px;border:4px solid;border-color:#7c7c7c #b2b2b2 #bcbcbc #848484;background:#dadada"></div>
<span class="a t" style="left:527.6px;top:841.0px;font-size:12px;line-height:12px;letter-spacing:-0.69px;">10.10</span>
<div class="a" style="left:576.2px;top:834.1px;width:54.0px;height:25.0px;border:4px solid;border-color:#7c7c7c #b2b2b2 #bcbcbc #848484;background:#dadada"></div>
<span class="a t" style="left:581.6px;top:841.0px;font-size:12px;line-height:12px;letter-spacing:-0.69px;">10.05</span>
<span class="a t" style="left:157.4px;top:867.0px;font-size:13px;line-height:13px;font-weight:bold;-webkit-text-stroke:.35px;transform:scaleX(0.847);transform-origin:0 0;">Chip2</span>
<div class="a" style="left:198.2px;top:859.1px;width:54.0px;height:25.0px;border:4px solid;border-color:#7c7c7c #b2b2b2 #bcbcbc #848484;background:#dadada"></div>
<span class="a t" style="left:203.6px;top:866.0px;font-size:12px;line-height:12px;letter-spacing:-0.67px;">9.99</span>
<div class="a" style="left:252.2px;top:859.1px;width:54.0px;height:25.0px;border:4px solid;border-color:#7c7c7c #b2b2b2 #bcbcbc #848484;background:#dadada"></div>
<span class="a t" style="left:257.6px;top:866.0px;font-size:12px;line-height:12px;letter-spacing:-0.67px;">10.11</span>
<div class="a" style="left:306.2px;top:859.1px;width:54.0px;height:25.0px;border:4px solid;border-color:#7c7c7c #b2b2b2 #bcbcbc #848484;background:#dadada"></div>
<span class="a t" style="left:311.6px;top:866.0px;font-size:12px;line-height:12px;letter-spacing:-0.67px;">10.11</span>
<div class="a" style="left:360.2px;top:859.1px;width:54.0px;height:25.0px;border:4px solid;border-color:#7c7c7c #b2b2b2 #bcbcbc #848484;background:#dadada"></div>
<span class="a t" style="left:365.6px;top:866.0px;font-size:12px;line-height:12px;letter-spacing:-0.69px;">10.17</span>
<div class="a" style="left:414.2px;top:859.1px;width:54.0px;height:25.0px;border:4px solid;border-color:#7c7c7c #b2b2b2 #bcbcbc #848484;background:#dadada"></div>
<span class="a t" style="left:419.6px;top:866.0px;font-size:12px;line-height:12px;letter-spacing:-0.69px;">10.17</span>
<div class="a" style="left:468.2px;top:859.1px;width:54.0px;height:25.0px;border:4px solid;border-color:#7c7c7c #b2b2b2 #bcbcbc #848484;background:#dadada"></div>
<span class="a t" style="left:473.6px;top:866.0px;font-size:12px;line-height:12px;letter-spacing:-0.69px;">10.10</span>
<div class="a" style="left:522.2px;top:859.1px;width:54.0px;height:25.0px;border:4px solid;border-color:#7c7c7c #b2b2b2 #bcbcbc #848484;background:#dadada"></div>
<span class="a t" style="left:527.6px;top:866.0px;font-size:12px;line-height:12px;letter-spacing:-0.67px;">2.94</span>
<div class="a" style="left:576.2px;top:859.1px;width:54.0px;height:25.0px;border:4px solid;border-color:#7c7c7c #b2b2b2 #bcbcbc #848484;background:#dadada"></div>
<span class="a t" style="left:581.6px;top:866.0px;font-size:12px;line-height:12px;letter-spacing:-0.69px;">10.39</span>
<span class="a t" style="left:157.4px;top:891.0px;font-size:13px;line-height:13px;font-weight:bold;-webkit-text-stroke:.35px;transform:scaleX(0.847);transform-origin:0 0;">Chip3</span>
<div class="a" style="left:198.2px;top:884.1px;width:54.0px;height:25.0px;border:4px solid;border-color:#7c7c7c #b2b2b2 #bcbcbc #848484;background:#dadada"></div>
<span class="a t" style="left:203.6px;top:891.0px;font-size:12px;line-height:12px;letter-spacing:-0.69px;">10.20</span>
<div class="a" style="left:252.2px;top:884.1px;width:54.0px;height:25.0px;border:4px solid;border-color:#7c7c7c #b2b2b2 #bcbcbc #848484;background:#dadada"></div>
<span class="a t" style="left:257.6px;top:891.0px;font-size:12px;line-height:12px;letter-spacing:-0.69px;">10.15</span>
<div class="a" style="left:306.2px;top:884.1px;width:54.0px;height:25.0px;border:4px solid;border-color:#7c7c7c #b2b2b2 #bcbcbc #848484;background:#dadada"></div>
<span class="a t" style="left:311.6px;top:891.0px;font-size:12px;line-height:12px;letter-spacing:-0.69px;">10.21</span>
<div class="a" style="left:360.2px;top:884.1px;width:54.0px;height:25.0px;border:4px solid;border-color:#7c7c7c #b2b2b2 #bcbcbc #848484;background:#dadada"></div>
<span class="a t" style="left:365.6px;top:891.0px;font-size:12px;line-height:12px;letter-spacing:-0.69px;">10.13</span>
<div class="a" style="left:414.2px;top:884.1px;width:54.0px;height:25.0px;border:4px solid;border-color:#7c7c7c #b2b2b2 #bcbcbc #848484;background:#dadada"></div>
<span class="a t" style="left:419.6px;top:891.0px;font-size:12px;line-height:12px;letter-spacing:-0.69px;">10.10</span>
<div class="a" style="left:468.2px;top:884.1px;width:54.0px;height:25.0px;border:4px solid;border-color:#7c7c7c #b2b2b2 #bcbcbc #848484;background:#dadada"></div>
<span class="a t" style="left:473.6px;top:891.0px;font-size:12px;line-height:12px;letter-spacing:-0.69px;">10.20</span>
<div class="a" style="left:522.2px;top:884.1px;width:54.0px;height:25.0px;border:4px solid;border-color:#7c7c7c #b2b2b2 #bcbcbc #848484;background:#dadada"></div>
<span class="a t" style="left:527.6px;top:891.0px;font-size:12px;line-height:12px;letter-spacing:-0.69px;">10.29</span>
<div class="a" style="left:576.2px;top:884.1px;width:54.0px;height:25.0px;border:4px solid;border-color:#7c7c7c #b2b2b2 #bcbcbc #848484;background:#dadada"></div>
<span class="a t" style="left:581.6px;top:891.0px;font-size:12px;line-height:12px;letter-spacing:-0.69px;">10.32</span>
<span class="a t" style="left:699.8px;top:793.0px;font-size:12px;line-height:12px;font-weight:bold;-webkit-text-stroke:.35px;transform:scaleX(0.959);transform-origin:0 0;">MeanPWChip</span>
<div class="a" style="left:698.2px;top:807.1px;width:439.6px;height:107.6px;background:#9a9a9a;border:4px solid;border-color:#e8e8e8 #bababa #bababa #e4e4e4;box-shadow:inset 1px 1px 0 #cfcfcf"></div>
<span class="a t" style="left:661.3px;top:818.0px;font-size:13px;line-height:13px;font-weight:bold;-webkit-text-stroke:.35px;transform:scaleX(0.847);transform-origin:0 0;">Chip0</span>
<div class="a" style="left:702.2px;top:811.1px;width:54.0px;height:25.0px;border:4px solid;border-color:#7c7c7c #b2b2b2 #bcbcbc #848484;background:#dadada"></div>
<span class="a t" style="left:707.6px;top:818.0px;font-size:12px;line-height:12px;letter-spacing:-0.69px;">92.65</span>
<div class="a" style="left:756.2px;top:811.1px;width:54.0px;height:25.0px;border:4px solid;border-color:#7c7c7c #b2b2b2 #bcbcbc #848484;background:#dadada"></div>
<span class="a t" style="left:761.6px;top:818.0px;font-size:12px;line-height:12px;letter-spacing:-0.69px;">99.57</span>
<div class="a" style="left:810.2px;top:811.1px;width:54.0px;height:25.0px;border:4px solid;border-color:#7c7c7c #b2b2b2 #bcbcbc #848484;background:#dadada"></div>
<span class="a t" style="left:815.6px;top:818.0px;font-size:12px;line-height:12px;letter-spacing:-0.69px;">98.59</span>
<div class="a" style="left:864.2px;top:811.1px;width:54.0px;height:25.0px;border:4px solid;border-color:#7c7c7c #b2b2b2 #bcbcbc #848484;background:#dadada"></div>
<span class="a t" style="left:869.6px;top:818.0px;font-size:12px;line-height:12px;letter-spacing:-0.69px;">96.87</span>
<div class="a" style="left:918.2px;top:811.1px;width:54.0px;height:25.0px;border:4px solid;border-color:#7c7c7c #b2b2b2 #bcbcbc #848484;background:#dadada"></div>
<span class="a t" style="left:923.6px;top:818.0px;font-size:12px;line-height:12px;letter-spacing:-0.70px;">101.54</span>
<div class="a" style="left:972.2px;top:811.1px;width:54.0px;height:25.0px;border:4px solid;border-color:#7c7c7c #b2b2b2 #bcbcbc #848484;background:#dadada"></div>
<span class="a t" style="left:977.6px;top:818.0px;font-size:12px;line-height:12px;letter-spacing:-0.69px;">99.68</span>
<div class="a" style="left:1026.2px;top:811.1px;width:54.0px;height:25.0px;border:4px solid;border-color:#7c7c7c #b2b2b2 #bcbcbc #848484;background:#dadada"></div>
<span class="a t" style="left:1031.6px;top:818.0px;font-size:12px;line-height:12px;letter-spacing:-0.69px;">101.11</span>
<div class="a" style="left:1080.2px;top:811.1px;width:54.0px;height:25.0px;border:4px solid;border-color:#7c7c7c #b2b2b2 #bcbcbc #848484;background:#dadada"></div>
<span class="a t" style="left:1085.6px;top:818.0px;font-size:12px;line-height:12px;letter-spacing:-0.70px;">101.65</span>
<span class="a t" style="left:661.3px;top:843.0px;font-size:13px;line-height:13px;font-weight:bold;-webkit-text-stroke:.35px;transform:scaleX(0.847);transform-origin:0 0;">Chip1</span>
<div class="a" style="left:702.2px;top:836.1px;width:54.0px;height:25.0px;border:4px solid;border-color:#7c7c7c #b2b2b2 #bcbcbc #848484;background:#dadada"></div>
<span class="a t" style="left:707.6px;top:843.0px;font-size:12px;line-height:12px;letter-spacing:-0.69px;">96.43</span>
<div class="a" style="left:756.2px;top:836.1px;width:54.0px;height:25.0px;border:4px solid;border-color:#7c7c7c #b2b2b2 #bcbcbc #848484;background:#dadada"></div>
<span class="a t" style="left:761.6px;top:843.0px;font-size:12px;line-height:12px;letter-spacing:-0.69px;">96.29</span>
<div class="a" style="left:810.2px;top:836.1px;width:54.0px;height:25.0px;border:4px solid;border-color:#7c7c7c #b2b2b2 #bcbcbc #848484;background:#dadada"></div>
<span class="a t" style="left:815.6px;top:843.0px;font-size:12px;line-height:12px;letter-spacing:-0.69px;">99.43</span>
<div class="a" style="left:864.2px;top:836.1px;width:54.0px;height:25.0px;border:4px solid;border-color:#7c7c7c #b2b2b2 #bcbcbc #848484;background:#dadada"></div>
<span class="a t" style="left:869.6px;top:843.0px;font-size:12px;line-height:12px;letter-spacing:-0.69px;">95.44</span>
<div class="a" style="left:918.2px;top:836.1px;width:54.0px;height:25.0px;border:4px solid;border-color:#7c7c7c #b2b2b2 #bcbcbc #848484;background:#dadada"></div>
<span class="a t" style="left:923.6px;top:843.0px;font-size:12px;line-height:12px;letter-spacing:-0.70px;">101.28</span>
<div class="a" style="left:972.2px;top:836.1px;width:54.0px;height:25.0px;border:4px solid;border-color:#7c7c7c #b2b2b2 #bcbcbc #848484;background:#dadada"></div>
<span class="a t" style="left:977.6px;top:843.0px;font-size:12px;line-height:12px;letter-spacing:-0.69px;">95.94</span>
<div class="a" style="left:1026.2px;top:836.1px;width:54.0px;height:25.0px;border:4px solid;border-color:#7c7c7c #b2b2b2 #bcbcbc #848484;background:#dadada"></div>
<span class="a t" style="left:1031.6px;top:843.0px;font-size:12px;line-height:12px;letter-spacing:-0.69px;">97.75</span>
<div class="a" style="left:1080.2px;top:836.1px;width:54.0px;height:25.0px;border:4px solid;border-color:#7c7c7c #b2b2b2 #bcbcbc #848484;background:#dadada"></div>
<span class="a t" style="left:1085.6px;top:843.0px;font-size:12px;line-height:12px;letter-spacing:-0.69px;">96.33</span>
<span class="a t" style="left:661.3px;top:866.0px;font-size:13px;line-height:13px;font-weight:bold;-webkit-text-stroke:.35px;transform:scaleX(0.847);transform-origin:0 0;">Chip2</span>
<div class="a" style="left:702.2px;top:861.1px;width:54.0px;height:25.0px;border:4px solid;border-color:#7c7c7c #b2b2b2 #bcbcbc #848484;background:#dadada"></div>
<span class="a t" style="left:707.6px;top:868.0px;font-size:12px;line-height:12px;letter-spacing:-0.70px;">100.68</span>
<div class="a" style="left:756.2px;top:861.1px;width:54.0px;height:25.0px;border:4px solid;border-color:#7c7c7c #b2b2b2 #bcbcbc #848484;background:#dadada"></div>
<span class="a t" style="left:761.6px;top:868.0px;font-size:12px;line-height:12px;letter-spacing:-0.69px;">99.65</span>
<div class="a" style="left:810.2px;top:861.1px;width:54.0px;height:25.0px;border:4px solid;border-color:#7c7c7c #b2b2b2 #bcbcbc #848484;background:#dadada"></div>
<span class="a t" style="left:815.6px;top:868.0px;font-size:12px;line-height:12px;letter-spacing:-0.69px;">98.64</span>
<div class="a" style="left:864.2px;top:861.1px;width:54.0px;height:25.0px;border:4px solid;border-color:#7c7c7c #b2b2b2 #bcbcbc #848484;background:#dadada"></div>
<span class="a t" style="left:869.6px;top:868.0px;font-size:12px;line-height:12px;letter-spacing:-0.69px;">94.96</span>
<div class="a" style="left:918.2px;top:861.1px;width:54.0px;height:25.0px;border:4px solid;border-color:#7c7c7c #b2b2b2 #bcbcbc #848484;background:#dadada"></div>
<span class="a t" style="left:923.6px;top:868.0px;font-size:12px;line-height:12px;letter-spacing:-0.70px;">100.31</span>
<div class="a" style="left:972.2px;top:861.1px;width:54.0px;height:25.0px;border:4px solid;border-color:#7c7c7c #b2b2b2 #bcbcbc #848484;background:#dadada"></div>
<span class="a t" style="left:977.6px;top:868.0px;font-size:12px;line-height:12px;letter-spacing:-0.70px;">101.06</span>
<div class="a" style="left:1026.2px;top:861.1px;width:54.0px;height:25.0px;border:4px solid;border-color:#7c7c7c #b2b2b2 #bcbcbc #848484;background:#dadada"></div>
<span class="a t" style="left:1031.6px;top:868.0px;font-size:12px;line-height:12px;letter-spacing:-0.69px;">70.06</span>
<div class="a" style="left:1080.2px;top:861.1px;width:54.0px;height:25.0px;border:4px solid;border-color:#7c7c7c #b2b2b2 #bcbcbc #848484;background:#dadada"></div>
<span class="a t" style="left:1085.6px;top:868.0px;font-size:12px;line-height:12px;letter-spacing:-0.69px;">92.32</span>
<span class="a t" style="left:661.3px;top:889.0px;font-size:13px;line-height:13px;font-weight:bold;-webkit-text-stroke:.35px;transform:scaleX(0.847);transform-origin:0 0;">Chip3</span>
<div class="a" style="left:702.2px;top:886.1px;width:54.0px;height:25.0px;border:4px solid;border-color:#7c7c7c #b2b2b2 #bcbcbc #848484;background:#dadada"></div>
<span class="a t" style="left:707.6px;top:893.0px;font-size:12px;line-height:12px;letter-spacing:-0.69px;">97.36</span>
<div class="a" style="left:756.2px;top:886.1px;width:54.0px;height:25.0px;border:4px solid;border-color:#7c7c7c #b2b2b2 #bcbcbc #848484;background:#dadada"></div>
<span class="a t" style="left:761.6px;top:893.0px;font-size:12px;line-height:12px;letter-spacing:-0.70px;">105.89</span>
<div class="a" style="left:810.2px;top:886.1px;width:54.0px;height:25.0px;border:4px solid;border-color:#7c7c7c #b2b2b2 #bcbcbc #848484;background:#dadada"></div>
<span class="a t" style="left:815.6px;top:893.0px;font-size:12px;line-height:12px;letter-spacing:-0.69px;">99.48</span>
<div class="a" style="left:864.2px;top:886.1px;width:54.0px;height:25.0px;border:4px solid;border-color:#7c7c7c #b2b2b2 #bcbcbc #848484;background:#dadada"></div>
<span class="a t" style="left:869.6px;top:893.0px;font-size:12px;line-height:12px;letter-spacing:-0.70px;">101.85</span>
<div class="a" style="left:918.2px;top:886.1px;width:54.0px;height:25.0px;border:4px solid;border-color:#7c7c7c #b2b2b2 #bcbcbc #848484;background:#dadada"></div>
<span class="a t" style="left:923.6px;top:893.0px;font-size:12px;line-height:12px;letter-spacing:-0.70px;">103.05</span>
<div class="a" style="left:972.2px;top:886.1px;width:54.0px;height:25.0px;border:4px solid;border-color:#7c7c7c #b2b2b2 #bcbcbc #848484;background:#dadada"></div>
<span class="a t" style="left:977.6px;top:893.0px;font-size:12px;line-height:12px;letter-spacing:-0.70px;">102.50</span>
<div class="a" style="left:1026.2px;top:886.1px;width:54.0px;height:25.0px;border:4px solid;border-color:#7c7c7c #b2b2b2 #bcbcbc #848484;background:#dadada"></div>
<span class="a t" style="left:1031.6px;top:893.0px;font-size:12px;line-height:12px;letter-spacing:-0.70px;">100.85</span>
<div class="a" style="left:1080.2px;top:886.1px;width:54.0px;height:25.0px;border:4px solid;border-color:#7c7c7c #b2b2b2 #bcbcbc #848484;background:#dadada"></div>
<span class="a t" style="left:1085.6px;top:893.0px;font-size:12px;line-height:12px;letter-spacing:-0.70px;">102.12</span>
<span class="a t" style="left:194.5px;top:918.0px;font-size:12px;line-height:12px;letter-spacing:-0.10px;">meandel</span>
<div class="a" style="left:192.6px;top:934.4px;width:48.8px;height:19.6px;background:#b8b8b8;border:2px solid;border-color:#6e6e6e #e0e0e0 #e0e0e0 #6e6e6e"></div>
<span class="a t" style="left:194.5px;top:939.0px;font-size:12px;line-height:12px;letter-spacing:-0.59px;">9.86</span>
<span class="a t" style="left:23.0px;top:6.0px;font-size:12px;line-height:12px;letter-spacing:-0.25px;">feb_test_benchn3_Cern.vi</span>
<span class="a t" style="left:9.5px;top:27.0px;font-size:12px;line-height:12px;letter-spacing:-0.46px;"><u>F</u>ile</span>
<span class="a t" style="left:41.0px;top:27.0px;font-size:12px;line-height:12px;letter-spacing:-0.17px;"><u>E</u>dit</span>
<span class="a t" style="left:75.0px;top:27.0px;font-size:12px;line-height:12px;letter-spacing:-0.20px;"><u>V</u>iew</span>
<span class="a t" style="left:114.0px;top:27.0px;font-size:12px;line-height:12px;letter-spacing:-0.05px;"><u>P</u>roject</span>
<span class="a t" style="left:165.0px;top:27.0px;font-size:12px;line-height:12px;letter-spacing:-0.19px;"><u>O</u>perate</span>
<span class="a t" style="left:221.0px;top:27.0px;font-size:12px;line-height:12px;letter-spacing:0.20px;"><u>T</u>ools</span>
<span class="a t" style="left:264.0px;top:27.0px;font-size:12px;line-height:12px;letter-spacing:0.22px;"><u>W</u>indow</span>
<span class="a t" style="left:322.0px;top:27.0px;font-size:12px;line-height:12px;letter-spacing:-0.04px;"><u>H</u>elp</span>
<div class="a" style="left:0.0px;top:982.0px;width:1280.0px;height:42.0px;background:linear-gradient(#26383e 0,#26383e 1px,#a8c4cc 1px,#a8c4cc 2px,#1e3a4c 2px,#1e3a4c 3px,#9abcd4 3px,#9abcd4 4px,#386e8c 4px,#3a7ca2 12px,#3680a8 50%,#3480aa 100%)"></div>
<div class="a" style="left:640.0px;top:986.0px;width:640.0px;height:38.0px;background:linear-gradient(90deg,rgba(20,50,100,0) 0,rgba(24,56,110,.5) 45%,rgba(24,60,112,.7) 100%)"></div>
<div class="a" style="left:8.5px;top:985.5px;width:37.5px;height:37.5px;border-radius:50%;background:radial-gradient(ellipse 60% 45% at 50% 96%,#30d8ff 0,rgba(40,170,230,.8) 50%,rgba(20,90,160,0) 100%),linear-gradient(#b4c6d6 0,#8aa6c0 42%,#0d4c84 50%,#0f5c9c 100%);border:1px solid #9cc4e0;box-shadow:0 0 0 1px #1c4660"></div>
<svg class="a" style="left:13px;top:991px" width="28" height="26" viewBox="13 991 28 26"><path d="M19.500 994.500q4.500-2.500 9 0l-1.500 8q-4.500-2-9.500.500z" fill="#f0642a"/><path d="M29.500 996q4.500 2.500 9-.500l-2 9q-4.500 2.500-8.500 0z" fill="#8cc63c"/><path d="M17 1004q4.500-2.500 9.500-.500l-1.700 8.500q-4.500-2-9.500.500z" fill="#3a9ce8"/><path d="M27.500 1005q4 2.500 8.500 0l-1.800 8.500q-4.500 2.500-8.500 0z" fill="#ffc41e"/></svg>
<div class="a" style="left:60.0px;top:985.0px;width:90.0px;height:38.0px;background:linear-gradient(rgba(255,255,255,.17) 0,rgba(255,255,255,.09) 48%,rgba(255,255,255,.0) 52%,rgba(255,255,255,.05) 100%);border:1px solid rgba(8,26,44,.75);border-radius:3px;box-shadow:inset 0 0 0 1px rgba(255,255,255,.38)"></div>
<div class="a" style="left:264.0px;top:985.0px;width:90.0px;height:38.0px;background:linear-gradient(rgba(255,255,255,.5) 0,rgba(255,255,255,.32) 48%,rgba(255,255,255,.16) 52%,rgba(255,255,255,.28) 100%);border:1px solid rgba(8,26,44,.75);border-radius:3px;box-shadow:inset 0 0 0 1px rgba(255,255,255,.38)"></div>
<div class="a" style="left:358.0px;top:985.0px;width:90.0px;height:38.0px;background:linear-gradient(rgba(255,255,255,.17) 0,rgba(255,255,255,.09) 48%,rgba(255,255,255,.0) 52%,rgba(255,255,255,.05) 100%);border:1px solid rgba(8,26,44,.75);border-radius:3px;box-shadow:inset 0 0 0 1px rgba(255,255,255,.38)"></div>
<div class="a" style="left:452.0px;top:985.0px;width:89.0px;height:38.0px;background:linear-gradient(rgba(255,255,255,.17) 0,rgba(255,255,255,.09) 48%,rgba(255,255,255,.0) 52%,rgba(255,255,255,.05) 100%);border:1px solid rgba(8,26,44,.75);border-radius:3px;box-shadow:inset 0 0 0 1px rgba(255,255,255,.38)"></div>
<div class="a" style="left:545.0px;top:985.0px;width:181.0px;height:38.0px;background:linear-gradient(rgba(255,255,255,.17) 0,rgba(255,255,255,.09) 48%,rgba(255,255,255,.0) 52%,rgba(255,255,255,.05) 100%);border:1px solid rgba(8,26,44,.75);border-radius:3px;box-shadow:inset 0 0 0 1px rgba(255,255,255,.38)"></div>
<div class="a" style="left:731.0px;top:985.0px;width:88.0px;height:38.0px;background:linear-gradient(rgba(255,255,255,.17) 0,rgba(255,255,255,.09) 48%,rgba(255,255,255,.0) 52%,rgba(255,255,255,.05) 100%);border:1px solid rgba(8,26,44,.75);border-radius:3px;box-shadow:inset 0 0 0 1px rgba(255,255,255,.38)"></div>
<div class="a" style="left:823.0px;top:985.0px;width:90.0px;height:38.0px;background:linear-gradient(rgba(255,255,255,.17) 0,rgba(255,255,255,.09) 48%,rgba(255,255,255,.0) 52%,rgba(255,255,255,.05) 100%);border:1px solid rgba(8,26,44,.75);border-radius:3px;box-shadow:inset 0 0 0 1px rgba(255,255,255,.38)"></div>
<span class="a t" style="left:102.2px;top:998.0px;font-size:12px;line-height:12px;color:#fff;letter-spacing:-0.52px;">DFS - ...</span>
<span class="a t" style="left:306.5px;top:998.0px;font-size:12px;line-height:12px;color:#fff;letter-spacing:-0.43px;">feb_te...</span>
<span class="a t" style="left:406.0px;top:998.0px;font-size:12px;line-height:12px;color:#fff;letter-spacing:0.07px;">N,,--</span>
<span class="a t" style="left:494.0px;top:998.0px;font-size:12px;line-height:12px;color:#fff;letter-spacing:-0.47px;">Skype</span>
<span class="a t" style="left:587.0px;top:998.0px;font-size:12px;line-height:12px;color:#fff;letter-spacing:-0.10px;">Conn...</span>
<span class="a t" style="left:679.0px;top:998.0px;font-size:12px;line-height:12px;color:#fff;letter-spacing:-0.88px;">FBEs_...</span>
<span class="a t" style="left:771.5px;top:998.0px;font-size:12px;line-height:12px;color:#fff;letter-spacing:-0.55px;">10072...</span>
<span class="a t" style="left:865.0px;top:998.0px;font-size:12px;line-height:12px;color:#fff;letter-spacing:-0.67px;">FEBs t...</span>
<span class="a t" style="left:1211.8px;top:991.0px;font-size:12px;line-height:12px;color:#fff;letter-spacing:-0.57px;">12:02</span>
<span class="a t" style="left:1196.3px;top:1008.0px;font-size:12px;line-height:12px;color:#fff;letter-spacing:-0.31px;">29/09/2015</span>
<div class="a" style="left:1266.0px;top:984.0px;width:14.0px;height:40.0px;background:linear-gradient(rgba(255,255,255,.35),rgba(255,255,255,.1));border-left:1px solid rgba(10,30,50,.8);box-shadow:inset 1px 0 0 rgba(255,255,255,.4)"></div>
<!-- firefox -->
<svg class="a" style="left:65px;top:987px" width="34" height="34" viewBox="65 987 34 34">
<defs><radialGradient id="ffg" cx=".55" cy=".35" r=".7"><stop offset="0" stop-color="#2aa0e0"/><stop offset=".6" stop-color="#1d5cb8"/><stop offset="1" stop-color="#1a2f80"/></radialGradient>
<linearGradient id="ffo" x1="0" y1="0" x2="1" y2="1"><stop offset="0" stop-color="#f06a1e"/><stop offset=".6" stop-color="#f0721e"/><stop offset="1" stop-color="#e8501a"/></linearGradient>
<linearGradient id="ffy" x1="0" y1="0" x2="0" y2="1"><stop offset="0" stop-color="#ffe43c"/><stop offset="1" stop-color="#f98a1c"/></linearGradient></defs>
<circle cx="84" cy="1001" r="11" fill="url(#ffg)"/>
<path d="M90 990.500q7 4 7 13.500q0 8-6 12.500q-6 4-13 2.500q5-1 9-6q4-5 4-11q0-6-1-11.500z" fill="url(#ffy)"/>
<path d="M69.500 993q1.500-1 3 1.500q2-2 5-2.500q-1 2-.500 3.500q2 1 4.500 1.500q-2 1-2.500 2.500l2 1.500q-3 1-3 3.500q1.500 3 5 2.500q3-.500 5-2q-1 4-5 5.500q4 1 8-3q-1 6-6 9.500q-6 3.500-12.500 1q-6-3-7.500-9.500q-1.500-7 2-12.500q.500-2.500 3-4z" fill="url(#ffo)"/>
</svg>
<!-- PL -->
<span class="a" style="left:163px;top:982.500px;font-family:'Liberation Serif',serif;font-weight:bold;font-size:35px;line-height:35px;color:#00ffff;-webkit-text-stroke:2.200px #000;paint-order:stroke fill">P</span>
<span class="a" style="left:174px;top:990.500px;font-family:'Liberation Serif',serif;font-weight:bold;font-size:35px;line-height:35px;color:#00ffff;-webkit-text-stroke:2.200px #000;paint-order:stroke fill;transform:scaleX(.88);transform-origin:0 0">L</span>
<!-- storm -->
<svg class="a" style="left:216px;top:986px" width="36" height="36" viewBox="216 986 36 36">
<path d="M220.500 1002.500q1.500-3 6-4q2-1 4-4.500q2-4.500 7-5q6-1 9.500 1q3 2 2.500 7q.500 3.500-2 5.500z" fill="#a0a0a0"/>
<path d="M218 1002.200h28.500l-1.500 2.600h-27z" fill="#111"/>
<path d="M219.500 1005.500h26.500v13.500h-26.500z" fill="#86b0d4" opacity=".55"/>
<path d="M221 1007l-1 2M224.500 1007l-1 2M228 1007l-1 2M238.500 1007l-1 2M242 1007l-1 2M245 1007l-1 2M222.500 1010.500l-1 2M226 1010.500l-1 2M240 1010.500l-1 2M243.500 1010.500l-1 2M221 1014l-1 2M224.500 1014l-1 2M228 1014l-1 2M238.500 1014l-1 2M242 1014l-1 2M245 1014l-1 2M222.500 1017l-1 2M226 1017l-1 2M236.500 1017l-1 2M240 1017l-1 2M243.500 1017l-1 2" stroke="#d6e6f4" stroke-width="1.200"/>
<path d="M234.500 1002.500l3 0-2.800 6.500h2.800l-8.300 12.500 3-9h-2.600z" fill="#ffe81e" stroke="#000" stroke-width=".8"/>
</svg>
<!-- labview taskbar icon -->
<svg class="a" style="left:270px;top:987px" width="33" height="30" viewBox="0 0 33 30">
<rect x="4" y="1" width="25" height="28" fill="#6e6e6e"/><rect x="5" y="5" width="23" height="20" fill="#0a0a0a"/>
<path d="M5 2.800h23M5 27.200h23" stroke="#d8d8d8" stroke-width="1.800" stroke-dasharray="2.200 1.400"/>
<ellipse cx="9" cy="15" rx="3.500" ry="8.500" fill="none" stroke="#2a9a4a" stroke-width="1.200"/><ellipse cx="25" cy="15" rx="3.500" ry="8.500" fill="none" stroke="#2a9a4a" stroke-width="1.200"/>
<path d="M9 6.500v17l15.500-8.500z" fill="#ffe61e" stroke="#3a3a00" stroke-width=".8"/>
<path d="M12 15h5M14.500 12.500v5" stroke="#000" stroke-width="1.300"/>
<path d="M0 11.500h7M25 14.500h7" stroke="#e84848" stroke-width="1.200"/><path d="M0 18.500h7" stroke="#3c78c8" stroke-width="1.200"/>
</svg>
<!-- N storm white icon -->
<svg class="a" style="left:364px;top:988px" width="32" height="32" viewBox="0 0 32 32">
<rect width="32" height="32" fill="#fff"/>
<path d="M3 9q0-3 4-3.500q2-3.500 7-3q4-2 8 0q4 0 6 3.500q2 1 1.500 3z" fill="#b4b4b4"/>
<path d="M2 9h28l-1 6l-4 1.500l-5-1l-6 1.500l-5-1.500l-5 .5z" fill="#000"/>
<path d="M5 18h.1M9 20h.1M7 23h.1M11 25h.1M5 27h.1M9 29h.1M13 21h.1M21 19h.1M24 22h.1M27 19h.1M22 26h.1M26 28h.1M19 24h.1M28 24h.1M17 28h.1M12 29h.1" stroke="#1428c8" stroke-width="1.600" stroke-linecap="square"/>
<path d="M16 16l3 0-3 5h3l-7 9 2.500-7h-3z" fill="#1432e6"/>
</svg>
<!-- skype -->
<div class="a" style="left:461px;top:990.500px;width:24px;height:24px;border-radius:50%;background:#00aff0"></div>
<div class="a" style="left:458.500px;top:988.500px;width:13px;height:13px;border-radius:50%;background:#00aff0"></div>
<div class="a" style="left:474px;top:1003.500px;width:12px;height:12px;border-radius:50%;background:#00aff0"></div>
<span class="a" style="left:466px;top:991.500px;font-size:20px;line-height:22px;font-weight:bold;color:#fff">S</span>
<div class="a" style="left:476.500px;top:1006.500px;width:11px;height:11px;border-radius:50%;background:#fff;border:1.500px solid #7ab800"></div>
<!-- excel x2 -->
<svg class="a" style="left:552px;top:988px" width="30" height="32" viewBox="0 0 30 32"><rect x="14" y="5" width="15" height="22" fill="#fff" stroke="#1e7044" stroke-width="1"/><path d="M17 9h10M17 13h10M17 17h10M17 21h10M22 6v20" stroke="#1e7044" stroke-width="1.400"/><path d="M1 4.500l17-3.500v30l-17-3.500z" fill="#1e7044"/><text x="4.500" y="21" font-family="Liberation Sans,sans-serif" font-weight="bold" font-size="14" fill="#fff">X</text></svg>
<svg class="a" style="left:644px;top:988px" width="30" height="32" viewBox="0 0 30 32"><rect x="14" y="5" width="15" height="22" fill="#fff" stroke="#1e7044" stroke-width="1"/><path d="M17 9h10M17 13h10M17 17h10M17 21h10M22 6v20" stroke="#1e7044" stroke-width="1.400"/><path d="M1 4.500l17-3.500v30l-17-3.500z" fill="#1e7044"/><text x="4.500" y="21" font-family="Liberation Sans,sans-serif" font-weight="bold" font-size="14" fill="#fff">X</text></svg>
<!-- paint -->
<svg class="a" style="left:735px;top:988px" width="32" height="32" viewBox="0 0 32 32"><ellipse cx="14" cy="18" rx="13" ry="10" fill="#e8e4dc" stroke="#9a9488" stroke-width="1"/><circle cx="7" cy="17" r="2.500" fill="#e8382a"/><circle cx="11" cy="12.500" r="2.500" fill="#f0c020"/><circle cx="17" cy="12" r="2.500" fill="#3cb43c"/><circle cx="9" cy="22.500" r="2.500" fill="#3a78dc"/><path d="M28 1l2 1.500-9 16-3 .5.500-3z" fill="#c87828" stroke="#6e3c10" stroke-width=".7"/><path d="M18 19l3-.5-1 5q-2 3-4 2.500q2-1.500 2-7z" fill="#e05020"/></svg>
<!-- folder -->
<svg class="a" style="left:828px;top:988px" width="30" height="32" viewBox="0 0 30 32"><path d="M3 4l9-2.500 2 2.500v26l-11 0z" fill="#e8c860"/><path d="M5 7l14-3v25l-14 1z" fill="#fff8d8"/><path d="M3 8l20-2.500 1.500 22.500-21.500 2z" fill="#f4d878" stroke="#c8a030" stroke-width=".8"/></svg>
<!-- tray -->
<svg class="a" style="left:920px;top:994px" width="260" height="22" viewBox="920 994 260 22">
<path d="M923 1003q0-6 6-5.500q7 .5 8 7q.5 5-5 5q-8 0-9-6.500z" fill="#e8f8d0" stroke="#8cc83c" stroke-width="1.500"/>
<rect x="946.500" y="997" width="15" height="15" rx="2.500" fill="#1e82e6"/><ellipse cx="954" cy="1004.500" rx="5.500" ry="4.500" fill="#fff"/><path d="M951 1004.500h6" stroke="#1e82e6" stroke-width="1.600"/>
<rect x="970" y="997" width="15.500" height="15.500" fill="#8cc850" stroke="#5a9a28" stroke-width="1"/><rect x="973" y="1000" width="9.500" height="9.500" rx="2" fill="#fff"/><path d="M977.700 1000v9.500M973 1004.700h9.500" stroke="#5a9a28" stroke-width="1.300"/>
<path d="M996 1000l4-2 5 1.500 3-1.500-3 6 2 5-5 2-4-1-2-5z" fill="#1e5a3c"/><path d="M1008 996l-7 9h3l-5 8" stroke="#ffe61e" stroke-width="1.800" fill="none"/><path d="M995 1003h12" stroke="#28a0a0" stroke-width="1.500"/>
<path d="M1022 997l4 2.500-4 2.500-4-2.500zM1030 997l4 2.500-4 2.500-4-2.500zM1022 1002l4 2.500-4 2.500-4-2.500zM1030 1002l4 2.500-4 2.500-4-2.500zM1026 1007.500l4 2.500-4 2.500-4-2.500z" fill="#f0f0f0" stroke="#888" stroke-width=".5"/><circle cx="1031.500" cy="1010" r="4" fill="#dc2828"/><path d="M1029.700 1008.200l3.600 3.600M1033.300 1008.200l-3.600 3.600" stroke="#fff" stroke-width="1.200"/>
<rect x="1042.500" y="997" width="17" height="12" fill="#0a1428" stroke="#000" stroke-width="1"/><path d="M1044 1007l3-6 2 4 2-7 2 6 2-3 2 5" stroke="#7ab4f0" stroke-width="1.100" fill="none"/><path d="M1047 1012.500h8M1051 1009v3" stroke="#111" stroke-width="1.500"/>
<path d="M1068 1003l9-6 7 5-8 10-8-2z" fill="#b4d8f0" stroke="#333" stroke-width="1"/><path d="M1066 1003h9v9h-9z" fill="#e61e1e"/><path d="M1067.500 1004.500l6 6M1073.500 1004.500l-6 6" stroke="#fff" stroke-width="1.500"/>
<circle cx="1098" cy="1004.500" r="8" fill="#3ca03c" stroke="#c8e8a0" stroke-width="1.200"/><path d="M1093.500 1003.500a4.500 4.500 0 0 1 8-1.500l1.500-1v4h-4l1.300-1.300a3 3 0 0 0-5 1zM1102.500 1005.500a4.500 4.500 0 0 1-8 1.500l-1.500 1v-4h4l-1.300 1.300a3 3 0 0 0 5-1z" fill="#e8f8a0"/>
<path d="M1115.500 997v15" stroke="#fff" stroke-width="1.500"/><path d="M1117 998q3-1.500 5 0t5 0v7q-3 1.500-5 0t-5 0z" fill="#fff"/>
<rect x="1143.500" y="1001" width="10" height="8" fill="#1e3c64" stroke="#fff" stroke-width="1.300"/><path d="M1144 1012.500h10M1149 1009.500v3" stroke="#fff" stroke-width="1.300"/><path d="M1140.500 997v9h2.500M1139 997h3.500v3h-3.500z" stroke="#fff" stroke-width="1.100" fill="#fff"/>
<path d="M1163 1002h3l4-4v13l-4-4h-3z" fill="#fff"/><path d="M1172 1001.500q2 3 0 6M1174.500 999.500q3.500 5 0 10" stroke="#fff" stroke-width="1.100" fill="none"/>
</svg>

</body></html>
